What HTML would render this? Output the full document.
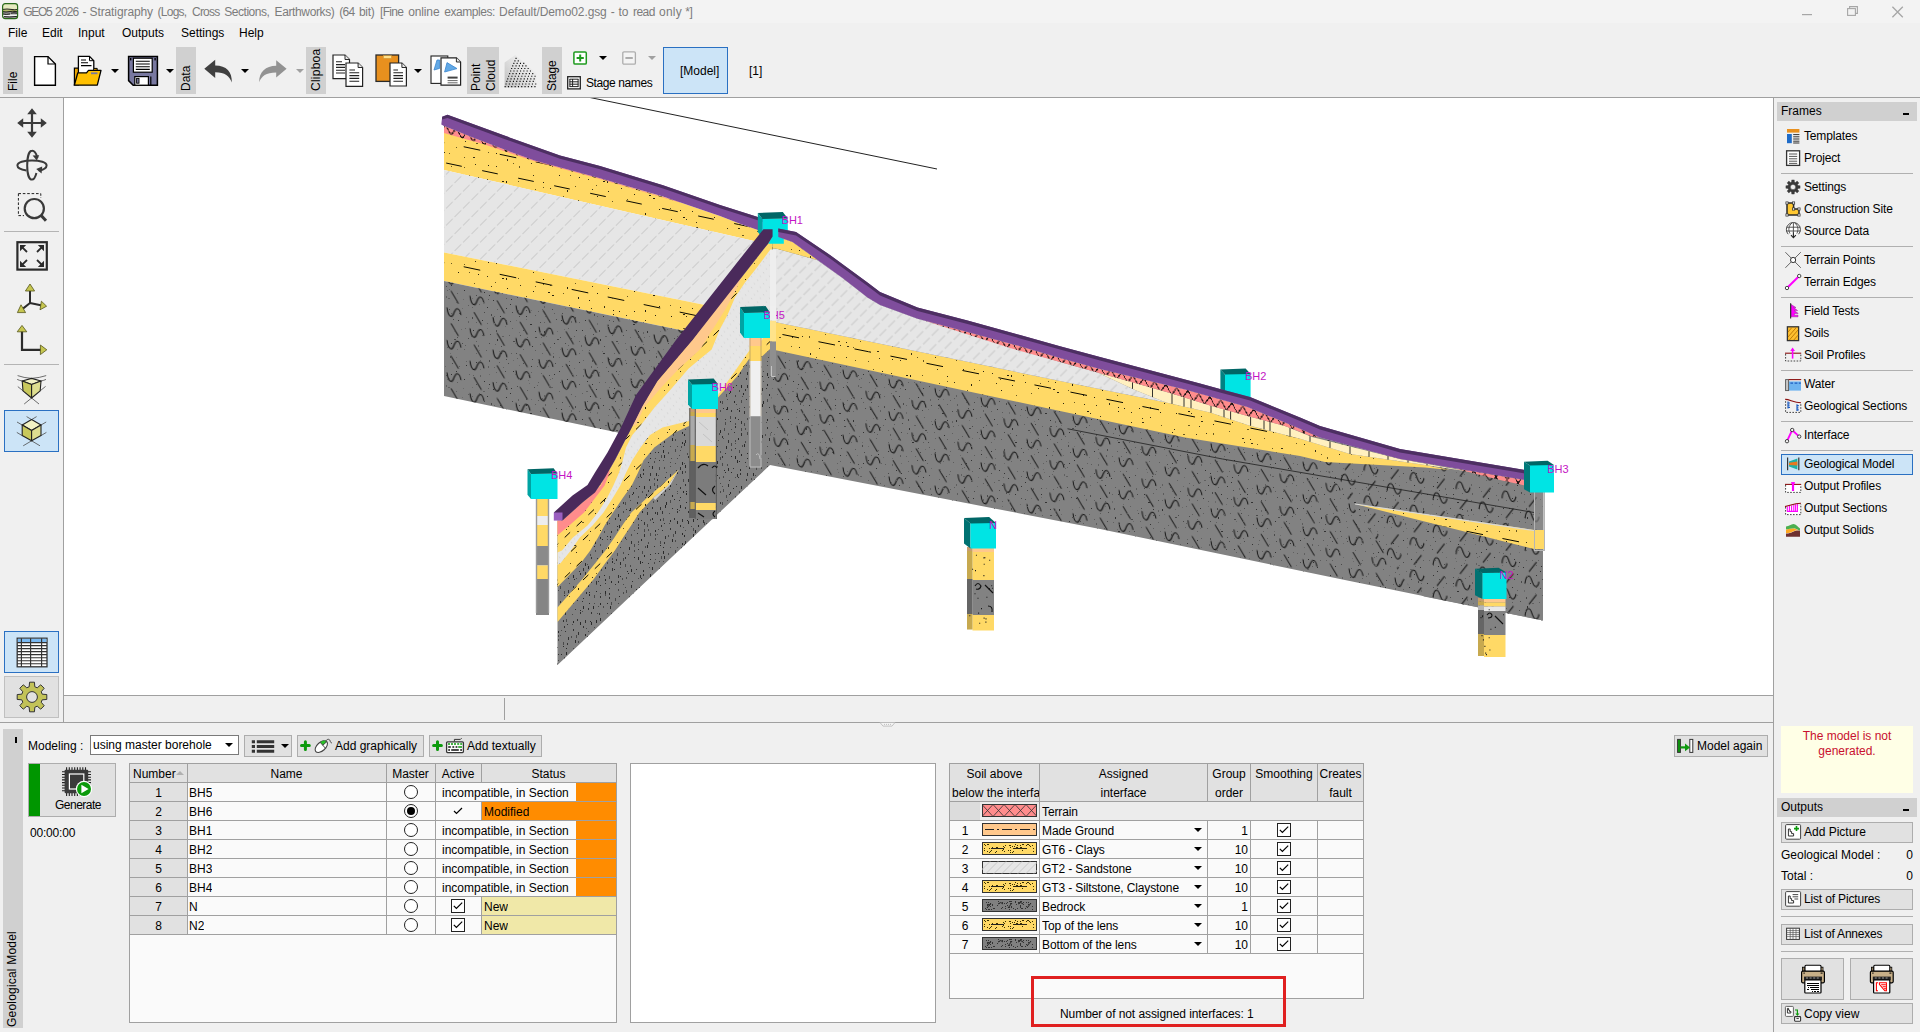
<!DOCTYPE html>
<html lang="en"><head><meta charset="utf-8"><title>GEO5 2026 - Stratigraphy</title>
<style>
*{box-sizing:border-box;margin:0;padding:0}
html,body{width:1920px;height:1032px;overflow:hidden;background:#f0f0f0}
body{font-family:"Liberation Sans",sans-serif;font-size:12px;color:#000;position:relative}
.a{position:absolute}
.t{position:absolute;white-space:nowrap;line-height:14px;height:14px}
.lbl{position:absolute;background:#d0d0d0}
.lbl span{position:absolute;white-space:nowrap;transform-origin:0 0;transform:rotate(-90deg);line-height:14px}
.btn{position:absolute;background:#e1e1e1;border:1px solid #adadad}
.hl{position:absolute;height:1px;background:#a0a0a0}
.vl{position:absolute;width:1px;background:#a0a0a0}
.sel{position:absolute;background:#cce4f7;border:1px solid #2a70c2}
.arr{position:absolute;width:0;height:0;border-left:4px solid transparent;border-right:4px solid transparent;border-top:4px solid #000}
.arr.g{border-top-color:#a0a0a0}
.hd{position:absolute;background:#d0d0d0}
table{border-collapse:collapse}
.cell{position:absolute;white-space:nowrap;line-height:18px;height:18px;overflow:hidden}
.radio{position:absolute;width:14px;height:14px;border:1.2px solid #222;border-radius:50%;background:#fff}
.chk{position:absolute;width:14px;height:14px;border:1.2px solid #222;background:#fff}
svg{position:absolute;overflow:visible}
</style></head>
<body>
<!-- chrome -->
<div class="a" style="left:0;top:0;width:1920px;height:23px;background:#f3f3f3"></div>
<div class="t ttl" style="left:23px;top:5px;width:680px;color:#7c7c7c"><span style="position:absolute;left:0.2px;top:0;letter-spacing:-1.29px">GEO5</span><span style="position:absolute;left:32.1px;top:0;letter-spacing:-0.88px">2026</span><span style="position:absolute;left:59.6px;top:0;letter-spacing:-0.80px">-</span><span style="position:absolute;left:66.5px;top:0;letter-spacing:-0.10px">Stratigraphy</span><span style="position:absolute;left:134.6px;top:0;letter-spacing:-0.76px">(Logs,</span><span style="position:absolute;left:169.0px;top:0;letter-spacing:-0.77px">Cross</span><span style="position:absolute;left:201.2px;top:0;letter-spacing:-0.45px">Sections,</span><span style="position:absolute;left:251.5px;top:0;letter-spacing:-0.37px">Earthworks)</span><span style="position:absolute;left:316.2px;top:0;letter-spacing:-0.70px">(64</span><span style="position:absolute;left:335.9px;top:0;letter-spacing:-0.27px">bit)</span><span style="position:absolute;left:357.1px;top:0;letter-spacing:-0.70px">[Fine</span><span style="position:absolute;left:385.2px;top:0;letter-spacing:-0.13px">online</span><span style="position:absolute;left:421.2px;top:0;letter-spacing:-0.43px">examples:</span><span style="position:absolute;left:476.1px;top:0;letter-spacing:-0.10px">Default/Demo02.gsg</span><span style="position:absolute;left:587.8px;top:0;letter-spacing:-0.70px">-</span><span style="position:absolute;left:595.5px;top:0;letter-spacing:0.00px">to</span><span style="position:absolute;left:610.1px;top:0;letter-spacing:-0.58px">read</span><span style="position:absolute;left:636.1px;top:0;letter-spacing:0.20px">only</span><span style="position:absolute;left:662.3px;top:0;letter-spacing:-0.40px">*]</span></div>
<div class="t mnu" style="left:8px;top:26px;">File</div>
<div class="t mnu" style="left:42px;top:26px;">Edit</div>
<div class="t mnu" style="left:78px;top:26px;">Input</div>
<div class="t mnu" style="left:122px;top:26px;">Outputs</div>
<div class="t mnu" style="left:181px;top:26px;">Settings</div>
<div class="t mnu" style="left:239px;top:26px;">Help</div>
<div class="lbl" style="left:3px;top:47px;width:20px;height:47px"><span style="left:3px;top:44px;letter-spacing:0px">File</span></div>
<div class="lbl" style="left:176px;top:47px;width:20px;height:47px"><span style="left:3px;top:44px;letter-spacing:0px">Data</span></div>
<div class="lbl" style="left:306px;top:47px;width:20px;height:47px"><span style="left:3px;top:44px;letter-spacing:0.25px">Clipboa</span></div>
<div class="lbl" style="left:467px;top:47px;width:32px;height:47px"><span style="left:2px;top:44px">Point</span><span style="left:17px;top:44px">Cloud</span></div>
<div class="lbl" style="left:542px;top:47px;width:20px;height:47px"><span style="left:3px;top:44px;letter-spacing:-0.2px">Stage</span></div>
<div class="arr" style="left:111px;top:69px"></div>
<div class="arr" style="left:166px;top:69px"></div>
<div class="arr" style="left:241px;top:69px"></div>
<div class="arr g" style="left:296px;top:69px"></div>
<div class="arr" style="left:414px;top:69px"></div>
<div class="arr" style="left:599px;top:56px"></div>
<div class="arr g" style="left:648px;top:56px"></div>
<div class="t" style="left:586px;top:76px;letter-spacing:-0.4px;">Stage names</div>
<div class="sel" style="left:663px;top:47px;width:65px;height:47px;border-color:#2a70c2"></div>
<div class="t" style="left:680px;top:64px;">[Model]</div>
<div class="t" style="left:749px;top:64px;">[1]</div>
<div class="hl" style="left:0;top:97px;width:1920px;background:#a0a0a0"></div>
<div class="a" style="left:63px;top:98px;width:1711px;height:598px;background:#fff;border-left:1px solid #a0a0a0;border-right:1px solid #a0a0a0;border-bottom:1px solid #a0a0a0"></div>
<div class="vl" style="left:504px;top:698px;height:22px;background:#a0a0a0"></div>
<div class="hl" style="left:0;top:722px;width:1774px"></div>
<div class="vl" style="left:63px;top:695px;height:27px"></div>
<div class="vl" style="left:1773px;top:695px;height:337px"></div>
<div class="hl" style="left:4px;top:231px;width:55px;background:#b4b4b4"></div>
<div class="hl" style="left:4px;top:364px;width:55px;background:#b4b4b4"></div>
<div class="sel" style="left:4px;top:410px;width:55px;height:42px"></div>
<div class="sel" style="left:4px;top:631px;width:55px;height:42px"></div>
<div class="btn" style="left:4px;top:676px;width:55px;height:42px;border-color:#c0c0c0"></div>
<!-- rpanel -->
<div class="hd" style="left:1777px;top:102px;width:140px;height:19px"></div>
<div class="t" style="left:1781px;top:104px;">Frames</div>
<div class="a" style="left:1903px;top:113px;width:6px;height:2px;background:#000"></div>
<div class="hl" style="left:1781px;top:173px;width:132px;background:#b0b0b0"></div>
<div class="hl" style="left:1781px;top:246px;width:132px;background:#b0b0b0"></div>
<div class="hl" style="left:1781px;top:297px;width:132px;background:#b0b0b0"></div>
<div class="hl" style="left:1781px;top:370px;width:132px;background:#b0b0b0"></div>
<div class="hl" style="left:1781px;top:421px;width:132px;background:#b0b0b0"></div>
<div class="hl" style="left:1781px;top:450px;width:132px;background:#b0b0b0"></div>
<div class="sel" style="left:1781px;top:454px;width:132px;height:21px"></div>
<div class="t" style="left:1804px;top:129px;letter-spacing:-0.16px;">Templates</div>
<div class="t" style="left:1804px;top:151px;letter-spacing:-0.16px;">Project</div>
<div class="t" style="left:1804px;top:180px;letter-spacing:-0.16px;">Settings</div>
<div class="t" style="left:1804px;top:202px;letter-spacing:-0.16px;">Construction Site</div>
<div class="t" style="left:1804px;top:224px;letter-spacing:-0.16px;">Source Data</div>
<div class="t" style="left:1804px;top:253px;letter-spacing:-0.16px;">Terrain Points</div>
<div class="t" style="left:1804px;top:275px;letter-spacing:-0.16px;">Terrain Edges</div>
<div class="t" style="left:1804px;top:304px;letter-spacing:-0.16px;">Field Tests</div>
<div class="t" style="left:1804px;top:326px;letter-spacing:-0.16px;">Soils</div>
<div class="t" style="left:1804px;top:348px;letter-spacing:-0.16px;">Soil Profiles</div>
<div class="t" style="left:1804px;top:377px;letter-spacing:-0.16px;">Water</div>
<div class="t" style="left:1804px;top:399px;letter-spacing:-0.16px;">Geological Sections</div>
<div class="t" style="left:1804px;top:428px;letter-spacing:-0.16px;">Interface</div>
<div class="t" style="left:1804px;top:457px;letter-spacing:-0.16px;">Geological Model</div>
<div class="t" style="left:1804px;top:479px;letter-spacing:-0.16px;">Output Profiles</div>
<div class="t" style="left:1804px;top:501px;letter-spacing:-0.16px;">Output Sections</div>
<div class="t" style="left:1804px;top:523px;letter-spacing:-0.16px;">Output Solids</div>
<div class="a" style="left:1781px;top:726px;width:132px;height:67px;background:#ffffe6"></div>
<div class="t" style="left:1781px;top:729px;width:132px;text-align:center;color:#c8102e">The model is not</div>
<div class="t" style="left:1781px;top:744px;width:132px;text-align:center;color:#c8102e">generated.</div>
<div class="hd" style="left:1777px;top:798px;width:140px;height:19px"></div>
<div class="t" style="left:1781px;top:800px;">Outputs</div>
<div class="a" style="left:1903px;top:809px;width:6px;height:2px;background:#000"></div>
<div class="btn" style="left:1781px;top:822px;width:132px;height:21px"></div>
<div class="t" style="left:1804px;top:825px;">Add Picture</div>
<div class="t" style="left:1781px;top:848px;">Geological Model :</div>
<div class="t" style="left:1881px;top:848px;width:32px;text-align:right">0</div>
<div class="t" style="left:1781px;top:869px;">Total :</div>
<div class="t" style="left:1881px;top:869px;width:32px;text-align:right">0</div>
<div class="btn" style="left:1781px;top:889px;width:132px;height:21px"></div>
<div class="t" style="left:1804px;top:892px;letter-spacing:-0.16px;">List of Pictures</div>
<div class="hl" style="left:1781px;top:916px;width:132px;background:#b0b0b0"></div>
<div class="btn" style="left:1781px;top:924px;width:132px;height:21px"></div>
<div class="t" style="left:1804px;top:927px;letter-spacing:-0.2px;">List of Annexes</div>
<div class="hl" style="left:1781px;top:951px;width:132px;background:#b0b0b0"></div>
<div class="btn" style="left:1781px;top:958px;width:63px;height:42px"></div>
<div class="btn" style="left:1850px;top:958px;width:63px;height:42px"></div>
<div class="btn" style="left:1781px;top:1003px;width:132px;height:21px"></div>
<div class="t" style="left:1804px;top:1007px;">Copy view</div>
<!-- bpanel -->
<div class="lbl" style="left:3px;top:729px;width:20px;height:299px"><span style="left:2px;top:298px;letter-spacing:0.2px">Geological Model</span></div>
<div class="a" style="left:14.7px;top:736.5px;width:2.3px;height:6.5px;background:#000"></div>
<div class="t" style="left:28px;top:739px;">Modeling :</div>
<div class="a" style="left:90px;top:735px;width:149px;height:20px;background:#fff;border:1px solid #7a7a7a"></div>
<div class="t" style="left:93px;top:738px;">using master borehole</div>
<div class="arr" style="left:225px;top:743px"></div>
<div class="btn" style="left:244px;top:735px;width:48px;height:22px"></div>
<div class="arr" style="left:281px;top:744px"></div>
<div class="btn" style="left:297px;top:735px;width:127px;height:22px"></div>
<div class="t" style="left:335px;top:739px;">Add graphically</div>
<div class="btn" style="left:429px;top:735px;width:113px;height:22px"></div>
<div class="t" style="left:467px;top:739px;">Add textually</div>
<div class="btn" style="left:1674px;top:735px;width:94px;height:22px"></div>
<div class="t" style="left:1697px;top:739px;">Model again</div>
<div class="btn" style="left:28px;top:763px;width:88px;height:54px"></div>
<div class="a" style="left:29px;top:764px;width:11px;height:52px;background:#009600"></div>
<div class="t" style="left:40px;top:798px;width:76px;text-align:center;letter-spacing:-0.5px">Generate</div>
<div class="t" style="left:30px;top:826px;letter-spacing:-0.2px;">00:00:00</div>
<div class="a" style="left:129px;top:763px;width:488px;height:260px;background:#fafafa;border:1px solid #a0a0a0"></div>
<div class="a" style="left:130px;top:764px;width:486px;height:18px;background:#e1e1e1"></div>
<div class="a" style="left:130px;top:782px;width:57px;height:152px;background:#e1e1e1"></div>
<div class="cell" style="left:133px;top:765px">Number</div>
<div class="cell" style="left:187px;top:765px;width:199px;text-align:center">Name</div>
<div class="cell" style="left:386px;top:765px;width:49px;text-align:center">Master</div>
<div class="cell" style="left:435px;top:765px;width:46px;text-align:center">Active</div>
<div class="cell" style="left:481px;top:765px;width:135px;text-align:center">Status</div>
<div class="a" style="left:176px;top:771px;width:0;height:0;border-left:4px solid transparent;border-right:4px solid transparent;border-bottom:4px solid #b0b0b0"></div>
<div class="a" style="left:576px;top:783px;width:40px;height:18px;background:#ff8c00"></div>
<div class="cell" style="left:442px;top:784px">incompatible, in Section</div>
<div class="cell" style="left:130px;top:784px;width:57px;text-align:center">1</div>
<div class="cell" style="left:189px;top:784px">BH5</div>
<div class="radio" style="left:403.5px;top:784.5px"></div>
<div class="a" style="left:482px;top:802px;width:134px;height:18px;background:#ff8c00"></div>
<div class="cell" style="left:484px;top:803px">Modified</div>
<svg style="left:453px;top:807px" width="10" height="8"><path d="M1 4 L3.5 6.5 L9 1" fill="none" stroke="#000" stroke-width="1.2"/></svg>
<div class="cell" style="left:130px;top:803px;width:57px;text-align:center">2</div>
<div class="cell" style="left:189px;top:803px">BH6</div>
<div class="radio" style="left:403.5px;top:803.5px"></div>
<div class="a" style="left:406.5px;top:806.5px;width:8px;height:8px;border-radius:50%;background:#000"></div>
<div class="a" style="left:576px;top:821px;width:40px;height:18px;background:#ff8c00"></div>
<div class="cell" style="left:442px;top:822px">incompatible, in Section</div>
<div class="cell" style="left:130px;top:822px;width:57px;text-align:center">3</div>
<div class="cell" style="left:189px;top:822px">BH1</div>
<div class="radio" style="left:403.5px;top:822.5px"></div>
<div class="a" style="left:576px;top:840px;width:40px;height:18px;background:#ff8c00"></div>
<div class="cell" style="left:442px;top:841px">incompatible, in Section</div>
<div class="cell" style="left:130px;top:841px;width:57px;text-align:center">4</div>
<div class="cell" style="left:189px;top:841px">BH2</div>
<div class="radio" style="left:403.5px;top:841.5px"></div>
<div class="a" style="left:576px;top:859px;width:40px;height:18px;background:#ff8c00"></div>
<div class="cell" style="left:442px;top:860px">incompatible, in Section</div>
<div class="cell" style="left:130px;top:860px;width:57px;text-align:center">5</div>
<div class="cell" style="left:189px;top:860px">BH3</div>
<div class="radio" style="left:403.5px;top:860.5px"></div>
<div class="a" style="left:576px;top:878px;width:40px;height:18px;background:#ff8c00"></div>
<div class="cell" style="left:442px;top:879px">incompatible, in Section</div>
<div class="cell" style="left:130px;top:879px;width:57px;text-align:center">6</div>
<div class="cell" style="left:189px;top:879px">BH4</div>
<div class="radio" style="left:403.5px;top:879.5px"></div>
<div class="a" style="left:482px;top:897px;width:134px;height:18px;background:#f0e8a8"></div>
<div class="cell" style="left:484px;top:898px">New</div>
<div class="chk" style="left:450.7px;top:898.6px"></div>
<svg style="left:452px;top:901px" width="12" height="10"><path d="M1.8 4.8 L4.4 7.4 L10.2 1.6" fill="none" stroke="#000" stroke-width="1.2"/></svg>
<div class="cell" style="left:130px;top:898px;width:57px;text-align:center">7</div>
<div class="cell" style="left:189px;top:898px">N</div>
<div class="radio" style="left:403.5px;top:898.5px"></div>
<div class="a" style="left:482px;top:916px;width:134px;height:18px;background:#f0e8a8"></div>
<div class="cell" style="left:484px;top:917px">New</div>
<div class="chk" style="left:450.7px;top:917.6px"></div>
<svg style="left:452px;top:920px" width="12" height="10"><path d="M1.8 4.8 L4.4 7.4 L10.2 1.6" fill="none" stroke="#000" stroke-width="1.2"/></svg>
<div class="cell" style="left:130px;top:917px;width:57px;text-align:center">8</div>
<div class="cell" style="left:189px;top:917px">N2</div>
<div class="radio" style="left:403.5px;top:917.5px"></div>
<div class="hl" style="left:130px;top:782px;width:486px;background:#a0a0a0"></div>
<div class="hl" style="left:130px;top:801px;width:486px;background:#a0a0a0"></div>
<div class="hl" style="left:130px;top:820px;width:486px;background:#a0a0a0"></div>
<div class="hl" style="left:130px;top:839px;width:486px;background:#a0a0a0"></div>
<div class="hl" style="left:130px;top:858px;width:486px;background:#a0a0a0"></div>
<div class="hl" style="left:130px;top:877px;width:486px;background:#a0a0a0"></div>
<div class="hl" style="left:130px;top:896px;width:486px;background:#a0a0a0"></div>
<div class="hl" style="left:130px;top:915px;width:486px;background:#a0a0a0"></div>
<div class="hl" style="left:130px;top:934px;width:486px;background:#a0a0a0"></div>
<div class="vl" style="left:187px;top:764px;height:171px;background:#a0a0a0"></div>
<div class="vl" style="left:386px;top:764px;height:171px;background:#a0a0a0"></div>
<div class="vl" style="left:435px;top:764px;height:171px;background:#a0a0a0"></div>
<div class="vl" style="left:481px;top:764px;height:19px;background:#a0a0a0"></div>
<div class="vl" style="left:481px;top:801px;height:19px;background:#a0a0a0"></div>
<div class="vl" style="left:481px;top:896px;height:19px;background:#a0a0a0"></div>
<div class="vl" style="left:481px;top:915px;height:19px;background:#a0a0a0"></div>
<div class="a" style="left:630px;top:763px;width:306px;height:260px;background:#fff;border:1px solid #a0a0a0"></div>
<!-- bpanel2 -->
<div class="a" style="left:949px;top:763px;width:415px;height:236px;background:#fafafa;border:1px solid #a0a0a0"></div>
<div class="a" style="left:950px;top:764px;width:413px;height:37px;background:#e1e1e1"></div>
<div class="a" style="left:950px;top:802px;width:413px;height:18px;background:#ececec"></div><div class="a" style="left:950px;top:802px;width:30px;height:18px;background:#dcdcdc"></div>
<div class="cell" style="left:950px;top:765px;width:89px;text-align:center;">Soil above</div>
<div class="cell" style="left:952px;top:784px;width:87px;text-align:left;">below the interface</div>
<div class="cell" style="left:1040px;top:765px;width:167px;text-align:center;">Assigned</div>
<div class="cell" style="left:1040px;top:784px;width:167px;text-align:center;">interface</div>
<div class="cell" style="left:1208px;top:765px;width:42px;text-align:center;">Group</div>
<div class="cell" style="left:1208px;top:784px;width:42px;text-align:center;">order</div>
<div class="cell" style="left:1251px;top:765px;width:66px;text-align:center;">Smoothing</div>
<div class="cell" style="left:1318px;top:765px;width:45px;text-align:center;">Creates</div>
<div class="cell" style="left:1318px;top:784px;width:45px;text-align:center;">fault</div>
<svg style="left:982px;top:804px;overflow:hidden" width="55" height="13" viewBox="0 0 55 13"><rect x="0.5" y="0.5" width="54" height="12" fill="#ff8c8c" stroke="#333"/><path d="M0 0.5 L11 12.5 M11 0.5 L0 12.5 M11 0.5 L22 12.5 M22 0.5 L11 12.5 M22 0.5 L33 12.5 M33 0.5 L22 12.5 M33 0.5 L44 12.5 M44 0.5 L33 12.5 M44 0.5 L55 12.5 M55 0.5 L44 12.5 " stroke="#333" stroke-width="0.8" fill="none" clip-path="inset(0)"/></svg>
<div class="cell" style="left:950px;top:803px;width:30px;text-align:center;"></div>
<div class="cell" style="left:1042px;top:803px;width:160px;text-align:left;letter-spacing:-0.12px;">Terrain</div>
<svg style="left:982px;top:823px;overflow:hidden" width="55" height="13" viewBox="0 0 55 13"><rect x="0.5" y="0.5" width="54" height="12" fill="#ffc88c" stroke="#333"/><path d="M3 6.5 H12 M15 6.5 H17 M20 6.5 H30 M33 6.5 H35 M38 6.5 H48 M51 6.5 H53" stroke="#222" stroke-width="1"/></svg>
<div class="cell" style="left:950px;top:822px;width:30px;text-align:center;">1</div>
<div class="cell" style="left:1042px;top:822px;width:160px;text-align:left;letter-spacing:-0.12px;">Made Ground</div>
<div class="arr" style="left:1194px;top:828px"></div>
<div class="cell" style="left:1208px;top:822px;width:40px;text-align:right;">1</div>
<div class="chk" style="left:1277px;top:822.6px"></div>
<svg style="left:1278.3px;top:825px" width="12" height="10"><path d="M1.8 4.8 L4.4 7.4 L10.2 1.6" fill="none" stroke="#000" stroke-width="1.2"/></svg>
<svg style="left:982px;top:842px;overflow:hidden" width="55" height="13" viewBox="0 0 55 13"><rect x="0.5" y="0.5" width="54" height="12" fill="#ffd966" stroke="#333"/><path d="M9 6.5 H22 M31 6.5 H45" stroke="#222" stroke-width="1"/><path d="M30 10.5h1M51 9.5h1M30 10.5h1M39 5.5h1M13 10.5h1M32 4.5h1M8 9.5h1M21 4.5h1M7 10.5h1M46 2.5h1M40 8.5h1M30 4.5h1M41 2.5h1M35 3.5h1M5 2.5h1M14 5.5h1M40 2.5h1M51 9.5h1M22 9.5h1M39 5.5h1M35 5.5h1M42 6.5h1M33 2.5h1M44 3.5h1M31 6.5h1M28 10.5h1M7 6.5h1M22 5.5h1M34 6.5h1M3 3.5h1M38 3.5h1M27 3.5h1M20 8.5h1M6 2.5h1M45 2.5h1M15 5.5h1M5 9.5h1M26 8.5h1M28 3.5h1M38 5.5h1M51 6.5h1M23 3.5h1M21 7.5h1M2 8.5h1M50 3.5h1M10 5.5h1M47 3.5h1M2 2.5h1M31 9.5h1M13 10.5h1M14 9.5h1M34 5.5h1M48 4.5h1M28 8.5h1M9 8.5h1M28 5.5h1M2 6.5h1M39 6.5h1" stroke="#3a3000" stroke-width="1" fill="none" shape-rendering="crispEdges"/></svg>
<div class="cell" style="left:950px;top:841px;width:30px;text-align:center;">2</div>
<div class="cell" style="left:1042px;top:841px;width:160px;text-align:left;letter-spacing:-0.12px;">GT6 - Clays</div>
<div class="arr" style="left:1194px;top:847px"></div>
<div class="cell" style="left:1208px;top:841px;width:40px;text-align:right;">10</div>
<div class="chk" style="left:1277px;top:841.6px"></div>
<svg style="left:1278.3px;top:844px" width="12" height="10"><path d="M1.8 4.8 L4.4 7.4 L10.2 1.6" fill="none" stroke="#000" stroke-width="1.2"/></svg>
<svg style="left:982px;top:861px;overflow:hidden" width="55" height="13" viewBox="0 0 55 13"><rect x="0.5" y="0.5" width="54" height="12" fill="#e6e6e6" stroke="#333"/><path d="M-4 12.5 L8 0.5 M4 12.5 L16 0.5 M12 12.5 L24 0.5 M20 12.5 L32 0.5 M28 12.5 L40 0.5 M36 12.5 L48 0.5 M44 12.5 L56 0.5 M52 12.5 L64 0.5 M60 12.5 L72 0.5 " stroke="#c8c8c8" stroke-width="1" fill="none"/></svg>
<div class="cell" style="left:950px;top:860px;width:30px;text-align:center;">3</div>
<div class="cell" style="left:1042px;top:860px;width:160px;text-align:left;letter-spacing:-0.12px;">GT2 - Sandstone</div>
<div class="arr" style="left:1194px;top:866px"></div>
<div class="cell" style="left:1208px;top:860px;width:40px;text-align:right;">10</div>
<div class="chk" style="left:1277px;top:860.6px"></div>
<svg style="left:1278.3px;top:863px" width="12" height="10"><path d="M1.8 4.8 L4.4 7.4 L10.2 1.6" fill="none" stroke="#000" stroke-width="1.2"/></svg>
<svg style="left:982px;top:880px;overflow:hidden" width="55" height="13" viewBox="0 0 55 13"><rect x="0.5" y="0.5" width="54" height="12" fill="#ffd966" stroke="#333"/><path d="M9 6.5 H22 M31 6.5 H45" stroke="#222" stroke-width="1"/><path d="M30 10.5h1M51 9.5h1M30 10.5h1M39 5.5h1M13 10.5h1M32 4.5h1M8 9.5h1M21 4.5h1M7 10.5h1M46 2.5h1M40 8.5h1M30 4.5h1M41 2.5h1M35 3.5h1M5 2.5h1M14 5.5h1M40 2.5h1M51 9.5h1M22 9.5h1M39 5.5h1M35 5.5h1M42 6.5h1M33 2.5h1M44 3.5h1M31 6.5h1M28 10.5h1M7 6.5h1M22 5.5h1M34 6.5h1M3 3.5h1M38 3.5h1M27 3.5h1M20 8.5h1M6 2.5h1M45 2.5h1M15 5.5h1M5 9.5h1M26 8.5h1M28 3.5h1M38 5.5h1M51 6.5h1M23 3.5h1M21 7.5h1M2 8.5h1M50 3.5h1M10 5.5h1M47 3.5h1M2 2.5h1M31 9.5h1M13 10.5h1M14 9.5h1M34 5.5h1M48 4.5h1M28 8.5h1M9 8.5h1M28 5.5h1M2 6.5h1M39 6.5h1" stroke="#3a3000" stroke-width="1" fill="none" shape-rendering="crispEdges"/></svg>
<div class="cell" style="left:950px;top:879px;width:30px;text-align:center;">4</div>
<div class="cell" style="left:1042px;top:879px;width:160px;text-align:left;letter-spacing:-0.12px;">GT3 - Siltstone, Claystone</div>
<div class="arr" style="left:1194px;top:885px"></div>
<div class="cell" style="left:1208px;top:879px;width:40px;text-align:right;">10</div>
<div class="chk" style="left:1277px;top:879.6px"></div>
<svg style="left:1278.3px;top:882px" width="12" height="10"><path d="M1.8 4.8 L4.4 7.4 L10.2 1.6" fill="none" stroke="#000" stroke-width="1.2"/></svg>
<svg style="left:982px;top:899px;overflow:hidden" width="55" height="13" viewBox="0 0 55 13"><rect x="0.5" y="0.5" width="54" height="12" fill="#808080" stroke="#333"/><path d="M5 9 L9 4 M16 5 q3 -3 5 0 M26 9 L30 4 M36 5 q3 -3 5 0 M45 9 L49 4" stroke="#222" stroke-width="1" fill="none"/><path d="M22 4.5h1M27 2.5h1M6 10.5h1M8 7.5h1M39 2.5h1M34 5.5h1M4 3.5h1M29 8.5h1M6 5.5h1M7 10.5h1M29 2.5h1M38 3.5h1M16 2.5h1M38 8.5h1M5 5.5h1M4 10.5h1M10 6.5h1M28 4.5h1M36 3.5h1M38 6.5h1M37 4.5h1M8 5.5h1M25 3.5h1M37 3.5h1M38 2.5h1M41 5.5h1M33 10.5h1M29 7.5h1M31 9.5h1M25 6.5h1M17 4.5h1M46 5.5h1M7 6.5h1M35 9.5h1M23 9.5h1M20 3.5h1M9 10.5h1M28 4.5h1M50 7.5h1M11 9.5h1M28 2.5h1M44 3.5h1M50 10.5h1M38 7.5h1M23 7.5h1M40 9.5h1M39 9.5h1M6 3.5h1M19 9.5h1M46 3.5h1M5 6.5h1M43 9.5h1M20 8.5h1M44 7.5h1M3 9.5h1M24 4.5h1M41 3.5h1M33 2.5h1M15 6.5h1M10 5.5h1M27 8.5h1M33 3.5h1M12 9.5h1M27 10.5h1" stroke="#333" stroke-width="1" fill="none" shape-rendering="crispEdges"/></svg>
<div class="cell" style="left:950px;top:898px;width:30px;text-align:center;">5</div>
<div class="cell" style="left:1042px;top:898px;width:160px;text-align:left;letter-spacing:-0.12px;">Bedrock</div>
<div class="arr" style="left:1194px;top:904px"></div>
<div class="cell" style="left:1208px;top:898px;width:40px;text-align:right;">1</div>
<div class="chk" style="left:1277px;top:898.6px"></div>
<svg style="left:1278.3px;top:901px" width="12" height="10"><path d="M1.8 4.8 L4.4 7.4 L10.2 1.6" fill="none" stroke="#000" stroke-width="1.2"/></svg>
<svg style="left:982px;top:918px;overflow:hidden" width="55" height="13" viewBox="0 0 55 13"><rect x="0.5" y="0.5" width="54" height="12" fill="#ffd966" stroke="#333"/><path d="M9 6.5 H22 M31 6.5 H45" stroke="#222" stroke-width="1"/><path d="M30 10.5h1M51 9.5h1M30 10.5h1M39 5.5h1M13 10.5h1M32 4.5h1M8 9.5h1M21 4.5h1M7 10.5h1M46 2.5h1M40 8.5h1M30 4.5h1M41 2.5h1M35 3.5h1M5 2.5h1M14 5.5h1M40 2.5h1M51 9.5h1M22 9.5h1M39 5.5h1M35 5.5h1M42 6.5h1M33 2.5h1M44 3.5h1M31 6.5h1M28 10.5h1M7 6.5h1M22 5.5h1M34 6.5h1M3 3.5h1M38 3.5h1M27 3.5h1M20 8.5h1M6 2.5h1M45 2.5h1M15 5.5h1M5 9.5h1M26 8.5h1M28 3.5h1M38 5.5h1M51 6.5h1M23 3.5h1M21 7.5h1M2 8.5h1M50 3.5h1M10 5.5h1M47 3.5h1M2 2.5h1M31 9.5h1M13 10.5h1M14 9.5h1M34 5.5h1M48 4.5h1M28 8.5h1M9 8.5h1M28 5.5h1M2 6.5h1M39 6.5h1" stroke="#3a3000" stroke-width="1" fill="none" shape-rendering="crispEdges"/></svg>
<div class="cell" style="left:950px;top:917px;width:30px;text-align:center;">6</div>
<div class="cell" style="left:1042px;top:917px;width:160px;text-align:left;letter-spacing:-0.12px;">Top of the lens</div>
<div class="arr" style="left:1194px;top:923px"></div>
<div class="cell" style="left:1208px;top:917px;width:40px;text-align:right;">10</div>
<div class="chk" style="left:1277px;top:917.6px"></div>
<svg style="left:1278.3px;top:920px" width="12" height="10"><path d="M1.8 4.8 L4.4 7.4 L10.2 1.6" fill="none" stroke="#000" stroke-width="1.2"/></svg>
<svg style="left:982px;top:937px;overflow:hidden" width="55" height="13" viewBox="0 0 55 13"><rect x="0.5" y="0.5" width="54" height="12" fill="#808080" stroke="#333"/><path d="M5 9 L9 4 M16 5 q3 -3 5 0 M26 9 L30 4 M36 5 q3 -3 5 0 M45 9 L49 4" stroke="#222" stroke-width="1" fill="none"/><path d="M22 4.5h1M27 2.5h1M6 10.5h1M8 7.5h1M39 2.5h1M34 5.5h1M4 3.5h1M29 8.5h1M6 5.5h1M7 10.5h1M29 2.5h1M38 3.5h1M16 2.5h1M38 8.5h1M5 5.5h1M4 10.5h1M10 6.5h1M28 4.5h1M36 3.5h1M38 6.5h1M37 4.5h1M8 5.5h1M25 3.5h1M37 3.5h1M38 2.5h1M41 5.5h1M33 10.5h1M29 7.5h1M31 9.5h1M25 6.5h1M17 4.5h1M46 5.5h1M7 6.5h1M35 9.5h1M23 9.5h1M20 3.5h1M9 10.5h1M28 4.5h1M50 7.5h1M11 9.5h1M28 2.5h1M44 3.5h1M50 10.5h1M38 7.5h1M23 7.5h1M40 9.5h1M39 9.5h1M6 3.5h1M19 9.5h1M46 3.5h1M5 6.5h1M43 9.5h1M20 8.5h1M44 7.5h1M3 9.5h1M24 4.5h1M41 3.5h1M33 2.5h1M15 6.5h1M10 5.5h1M27 8.5h1M33 3.5h1M12 9.5h1M27 10.5h1" stroke="#333" stroke-width="1" fill="none" shape-rendering="crispEdges"/></svg>
<div class="cell" style="left:950px;top:936px;width:30px;text-align:center;">7</div>
<div class="cell" style="left:1042px;top:936px;width:160px;text-align:left;letter-spacing:-0.12px;">Bottom of the lens</div>
<div class="arr" style="left:1194px;top:942px"></div>
<div class="cell" style="left:1208px;top:936px;width:40px;text-align:right;">10</div>
<div class="chk" style="left:1277px;top:936.6px"></div>
<svg style="left:1278.3px;top:939px" width="12" height="10"><path d="M1.8 4.8 L4.4 7.4 L10.2 1.6" fill="none" stroke="#000" stroke-width="1.2"/></svg>
<div class="hl" style="left:950px;top:801px;width:413px"></div>
<div class="hl" style="left:950px;top:820px;width:413px"></div>
<div class="hl" style="left:950px;top:839px;width:413px"></div>
<div class="hl" style="left:950px;top:858px;width:413px"></div>
<div class="hl" style="left:950px;top:877px;width:413px"></div>
<div class="hl" style="left:950px;top:896px;width:413px"></div>
<div class="hl" style="left:950px;top:915px;width:413px"></div>
<div class="hl" style="left:950px;top:934px;width:413px"></div>
<div class="hl" style="left:950px;top:953px;width:413px"></div>
<div class="vl" style="left:1039px;top:764px;height:38px"></div>
<div class="vl" style="left:1039px;top:802px;height:152px"></div>
<div class="vl" style="left:1207px;top:764px;height:38px"></div>
<div class="vl" style="left:1207px;top:821px;height:133px"></div>
<div class="vl" style="left:1250px;top:764px;height:38px"></div>
<div class="vl" style="left:1250px;top:821px;height:133px"></div>
<div class="vl" style="left:1317px;top:764px;height:38px"></div>
<div class="vl" style="left:1317px;top:821px;height:133px"></div>
<div class="a" style="left:1031px;top:976px;width:255px;height:51px;border:3px solid #e02020"></div>
<div class="t" style="left:1060px;top:1007px;letter-spacing:-0.07px;">Number of not assigned interfaces: 1</div>
<!-- scene -->
<svg style="left:0;top:0" width="1920" height="1032" viewBox="0 0 1920 1032"><defs><pattern id="dY" width="101" height="97" patternUnits="userSpaceOnUse"><path d="M6 7.5h1M1 45.5h1M1 46.5h1M8 66.5h1M21 5.5h1M17 43.5h1M14 69.5h1M14 70.5h1M13 84.5h1M30 92.5h1M35 41.5h2M38 90.5h1M50 37.5h1M52 50.5h1M45 56.5h1M47 69.5h1M58 2.5h1M64 14.5h1M60 60.5h1M60 70.5h1M65 78.5h1M77 37.5h2M72 46.5h2M70 89.5h1M84 55.5h1M91 88.5h1" stroke="#6b5a20" stroke-width="1" fill="none" shape-rendering="crispEdges"/><path d="M7 19.5h1M7 23.5h1M1 36.5h1M1 84.5h1M1 85.5h1M2 94.5h1M13 20.5h1M28 0.5h1M28 20.5h1M43 1.5h2M39 19.5h1M39 20.5h1M38 51.5h1M38 85.5h1M47 4.5h2M53 15.5h1M49 24.5h1M54 78.5h1M65 25.5h1M62 93.5h1M62 94.5h1M73 6.5h1M73 7.5h1M74 16.5h1M77 23.5h2M74 80.5h1M84 9.5h1M84 68.5h1M92 2.5h1M92 56.5h1M98 84.5h2" stroke="#2a2410" stroke-width="1" fill="none" shape-rendering="crispEdges"/><path d="M2 62.5h1M2 63.5h1M20 24.5h1M20 34.5h1M11 57.5h1M15 91.5h1M31 30.5h1M31 34.5h2M30 50.5h2M32 54.5h1M26 66.5h1M28 78.5h1M39 29.5h1M39 55.5h2M38 66.5h1M45 91.5h1M63 41.5h1M61 44.5h1M69 60.5h2M71 67.5h1M86 17.5h1M80 25.5h1M88 38.5h1M85 46.5h1M83 82.5h1M87 92.5h1M99 15.5h1M99 16.5h1M90 28.5h1M90 33.5h2M95 45.5h1M92 69.5h1" stroke="#3d3416" stroke-width="1" fill="none" shape-rendering="crispEdges"/></pattern><pattern id="dR" width="103" height="89" patternUnits="userSpaceOnUse"><path d="M2 2.5h1M7 4.5h1M12 34.5h1M20 48.5h1M20 83.5h1M22 10.5h1M26 17.5h1M27 42.5h1M23 44.5h1M31 4.5h1M30 48.5h1M30 49.5h1M35 80.5h1M31 83.5h1M39 46.5h1M47 10.5h1M45 26.5h1M56 38.5h1M54 50.5h1M53 78.5h1M61 19.5h1M64 55.5h1M59 69.5h1M64 74.5h1M70 68.5h1M66 78.5h1M66 79.5h1M76 10.5h1M76 11.5h1M76 32.5h1M75 56.5h1M74 83.5h1M87 6.5h1M84 26.5h1M85 42.5h1M94 31.5h1M96 26.5h1M97 68.5h1M99 86.5h1" stroke="#5c5c5c" stroke-width="1" fill="none" shape-rendering="crispEdges"/><path d="M4 9.5h1M4 23.5h1M1 53.5h1M4 65.5h1M0 76.5h1M13 24.5h1M11 52.5h1M14 27.5h1M16 43.5h1M33 10.5h1M31 69.5h1M42 64.5h1M38 86.5h1M44 1.5h1M50 41.5h1M49 62.5h1M45 82.5h1M51 32.5h1M59 12.5h1M60 31.5h1M68 13.5h1M67 83.5h1M77 18.5h1M75 61.5h1M82 56.5h1M82 57.5h1M87 84.5h1M93 59.5h1M101 4.5h1" stroke="#6a6a6a" stroke-width="1" fill="none" shape-rendering="crispEdges"/><path d="M0 18.5h1M3 43.5h1M3 44.5h1M13 18.5h1M12 70.5h1M7 76.5h1M8 82.5h1M16 16.5h1M23 6.5h1M23 26.5h1M22 29.5h1M25 65.5h1M25 66.5h1M26 70.5h1M25 77.5h1M27 86.5h1M35 23.5h1M34 29.5h1M34 30.5h1M29 39.5h1M29 40.5h1M29 55.5h1M37 22.5h1M36 31.5h2M44 35.5h1M54 5.5h1M57 18.5h1M56 54.5h1M56 55.5h1M53 61.5h1M52 82.5h1M60 40.5h1M64 86.5h1M68 4.5h1M68 19.5h1M68 20.5h1M71 35.5h2M67 37.5h1M82 11.5h1M84 16.5h1M82 49.5h1M83 77.5h1M91 11.5h1M90 26.5h1M90 69.5h2M100 61.5h1" stroke="#606060" stroke-width="1" fill="none" shape-rendering="crispEdges"/><path d="M2 30.5h1M4 49.5h1M5 68.5h1M1 86.5h1M8 7.5h1M11 43.5h1M8 63.5h1M17 3.5h1M19 31.5h1M20 70.5h2M25 55.5h1M34 19.5h1M38 0.5h1M38 1.5h1M40 7.5h1M37 42.5h1M41 52.5h1M42 72.5h2M47 46.5h1M45 70.5h1M50 76.5h1M56 71.5h1M64 28.5h1M60 50.5h1M60 51.5h1M72 45.5h1M77 4.5h1M77 5.5h1M79 47.5h1M79 48.5h1M78 67.5h1M77 76.5h1M84 63.5h1M84 64.5h1M94 3.5h1M93 15.5h1M94 53.5h1M89 79.5h1M96 7.5h1M100 45.5h1M98 54.5h1M101 74.5h2" stroke="#4a4a4a" stroke-width="1" fill="none" shape-rendering="crispEdges"/><path d="M11 49.5h1M16 10.5h1M15 57.5h2M20 64.5h1M17 79.5h1M29 64.5h1M29 65.5h1M39 18.5h1M39 76.5h1M44 15.5h1M46 53.5h1M54 9.5h1M52 23.5h1M64 6.5h1M61 63.5h1M72 25.5h1M70 53.5h1M67 63.5h1M77 28.5h1M75 40.5h1M81 33.5h1M85 72.5h1M85 73.5h1M94 41.5h1M88 49.5h1M88 86.5h2M101 15.5h1M99 32.5h1M98 37.5h1" stroke="#333333" stroke-width="1" fill="none" shape-rendering="crispEdges"/></pattern><pattern id="dF" width="97" height="101" patternUnits="userSpaceOnUse"><path d="M1.5 0v3M3.5 28v2M3.5 38v2M3.5 58v3M4.5 87v2M1 93.5h1M8 15.5h1M9.5 16v3M5.5 30v2M6.5 61v3M7 87.5h1M7.5 89v2M7 98.5h1M11.5 0v3M14.5 14v3M14.5 29v3M13.5 36v3M12 41.5h1M13 58.5h1M11.5 70v2M14 86.5h1M18.5 12v3M19.5 20v2M16.5 25v3M18.5 32v2M20 34.5h1M17.5 71v2M18 80.5h1M18.5 98v2M25 31.5h1M23.5 62v2M22 70.5h1M23.5 74v2M23.5 86v3M25 98.5h1M28.5 0v3M27.5 12v2M29.5 26v2M30.5 56v2M29.5 76v2M27 83.5h1M36.5 9v3M35 21.5h1M35 35.5h1M32 40.5h1M32 64.5h1M38.5 14v2M37.5 20v3M41.5 26v3M38.5 57v3M38 71.5h1M37 91.5h1M47 5.5h1M47.5 42v3M45 66.5h1M46 68.5h1M48.5 3v3M51 17.5h1M52 52.5h1M49.5 64v3M52 68.5h1M51.5 88v2M50 90.5h1M56.5 52v3M58.5 56v3M57 82.5h1M54 84.5h1M55.5 98v2M60.5 6v2M59.5 34v2M62.5 50v2M60 57.5h1M61.5 65v2M59 73.5h1M62.5 82v3M65.5 40v3M68 49.5h1M68 54.5h1M64.5 90v2M67 96.5h1M70.5 13v2M71 17.5h1M73.5 25v2M70.5 62v3M74.5 69v3M78 40.5h1M76 48.5h1M75.5 75v2M79 90.5h1M83.5 0v3M81 42.5h1M81.5 46v3M82.5 51v3M83 73.5h1M84.5 98v3M88.5 15v2M90.5 34v3M88.5 70v3M89 74.5h1M88.5 81v2M90.5 91v2M95 4.5h1M95.5 16v3M95.5 68v2M92 95.5h1" stroke="#2a2a2a" stroke-width="1" fill="none" shape-rendering="crispEdges"/><path d="M0 5.5h1M4 22.5h1M2.5 42v2M1 46.5h1M0 51.5h1M4.5 75v3M6 25.5h1M8.5 49v2M5 59.5h1M6.5 67v2M15 7.5h1M12 21.5h1M14.5 23v3M13.5 45v2M14 79.5h1M12.5 90v3M12 98.5h1M16 0.5h1M18.5 39v2M16.5 57v2M19.5 64v2M18 88.5h1M21.5 0v2M25 7.5h1M25.5 17v3M22.5 26v2M25 34.5h1M25.5 45v3M25.5 51v3M25.5 57v2M23.5 89v2M29 7.5h1M27 18.5h1M29 42.5h1M30.5 53v2M27.5 71v3M29.5 97v3M36 2.5h1M35.5 24v2M35.5 29v3M35.5 48v3M32 58.5h1M36.5 84v2M33.5 93v3M36 98.5h1M41.5 6v2M40.5 29v2M39 36.5h1M41.5 47v2M41.5 53v3M38 62.5h1M40.5 73v2M41 79.5h1M41.5 87v2M46.5 18v3M45.5 24v3M44 34.5h1M43.5 59v3M44.5 72v2M43 82.5h1M44.5 85v3M47.5 91v3M43.5 98v3M51.5 12v3M52 25.5h1M49.5 29v2M52.5 39v3M52.5 45v2M48.5 60v2M48 96.5h1M57 0.5h1M56.5 19v2M56.5 36v2M56 39.5h1M56 73.5h1M56.5 92v2M60 4.5h1M62.5 24v3M63.5 41v2M60.5 46v3M60.5 87v2M63 93.5h1M62.5 97v3M68.5 14v2M65.5 19v3M66.5 24v2M68.5 28v3M66.5 37v2M67 62.5h1M73.5 29v2M73.5 33v2M73 54.5h1M72.5 57v2M72.5 74v2M72.5 79v3M73 85.5h1M71.5 97v2M76 24.5h1M75 29.5h1M78.5 36v3M79.5 51v3M77.5 63v3M76 71.5h1M75.5 81v3M79.5 86v3M81.5 13v3M81 56.5h1M82.5 63v2M84 68.5h1M84 78.5h1M87 8.5h1M87 18.5h1M86.5 30v2M88 42.5h1M86.5 48v2M89 54.5h1M88 58.5h1M88 62.5h1M88.5 96v3M91.5 29v3M93.5 35v2M95 42.5h1M93.5 45v3M95 54.5h1M93 59.5h1M91 73.5h1M94 80.5h1M95 87.5h1M95 89.5h1" stroke="#4a4a4a" stroke-width="1" fill="none" shape-rendering="crispEdges"/><path d="M3.5 14v3M1.5 20v2M1.5 63v3M3.5 67v3M1.5 83v2M0 96.5h1M6.5 2v2M9.5 6v2M6.5 36v3M5.5 39v3M9.5 52v2M9.5 75v3M6.5 80v2M15 53.5h1M14.5 62v2M14.5 76v3M17.5 7v2M20.5 45v3M19 51.5h1M16 76.5h1M18.5 91v2M24.5 15v3M24 43.5h1M23 78.5h1M28.5 31v2M28 34.5h1M30 47.5h1M30.5 63v3M27.5 88v2M27.5 92v2M33.5 13v2M34.5 54v2M36.5 70v3M36.5 76v2M33 79.5h1M37 1.5h1M38 42.5h1M41.5 98v2M44 4.5h1M46 15.5h1M43.5 32v2M46 49.5h1M43.5 52v2M52.5 6v2M49.5 36v3M50 76.5h1M49.5 80v3M58 5.5h1M56.5 13v2M56.5 22v2M55 28.5h1M56 44.5h1M54 64.5h1M58.5 70v3M59 15.5h1M62.5 17v3M62.5 29v3M61.5 69v2M65 3.5h1M65.5 7v3M66 58.5h1M68.5 69v3M67.5 75v2M68.5 82v3M66.5 86v2M70.5 2v2M73.5 7v2M72 41.5h1M73 48.5h1M70 93.5h1M78.5 2v3M75.5 7v3M78.5 14v2M79.5 20v2M77 56.5h1M75.5 96v2M80.5 6v3M82 18.5h1M80 25.5h1M83.5 31v3M82.5 37v2M83.5 85v3M82.5 90v2M90 3.5h1M88.5 23v2M87 85.5h1M95.5 6v2M92.5 13v2M93.5 26v3M94 66.5h1" stroke="#333333" stroke-width="1" fill="none" shape-rendering="crispEdges"/></pattern><pattern id="yB" width="36" height="40" patternUnits="userSpaceOnUse" patternTransform="matrix(1,0.21,0,1,29.75,5.1)"><path d="M2 10h16M20 30h16" stroke="#0a0a00" stroke-width="1" shape-rendering="crispEdges"/></pattern><pattern id="yR" width="36" height="60" patternUnits="userSpaceOnUse" patternTransform="matrix(1,0.2,0,1,24.5,52.4)"><path d="M2 10h16" stroke="#0a0a00" stroke-width="1" shape-rendering="crispEdges"/></pattern><pattern id="yF" width="36" height="40" patternUnits="userSpaceOnUse" patternTransform="matrix(0.33,-0.315,0,1,0,6)"><path d="M2 10h16M20 30h16" stroke="#0a0a00" stroke-width="1" shape-rendering="crispEdges"/></pattern><pattern id="rB" width="46" height="32.5" patternUnits="userSpaceOnUse" patternTransform="matrix(1,0.21,0,1,6,0)"><path d="M4 3.5 c0.5 5.5 2.5 8 4 8 c2 0 2.5 -3.5 3.5 -5.5 c1 -2.5 2 -4 3.5 -3.5 c1.5 0.5 2.5 2.5 3 5.5 M8 19 l7.5 11 M31 2.5 l7.5 11 M27 20 c0.5 5.5 2.5 8 4 8 c2 0 2.5 -3.5 3.5 -5.5 c1 -2.5 2 -4 3.5 -3.5 c1.5 0.5 2.5 2.5 3 5.5" stroke="#161616" stroke-width="1.1" fill="none"/></pattern><pattern id="rR" width="46" height="32.5" patternUnits="userSpaceOnUse" patternTransform="matrix(1,0.2,0,1,11,5)"><path d="M4 3.5 c0.5 5.5 2.5 8 4 8 c2 0 2.5 -3.5 3.5 -5.5 c1 -2.5 2 -4 3.5 -3.5 c1.5 0.5 2.5 2.5 3 5.5 M8 19 l7.5 11 M31 2.5 l7.5 11 M27 20 c0.5 5.5 2.5 8 4 8 c2 0 2.5 -3.5 3.5 -5.5 c1 -2.5 2 -4 3.5 -3.5 c1.5 0.5 2.5 2.5 3 5.5" stroke="#161616" stroke-width="1.1" fill="none"/></pattern><pattern id="rM" width="46" height="32.5" patternUnits="userSpaceOnUse" patternTransform="matrix(1,0.2,0,1,3,9)"><path d="M4 10 c0.5 -5.5 2.5 -8 4 -8 c2 0 2.5 3.5 3.5 5.5 c1 2.5 2 4 3.5 3.5 c1.5 -0.5 2.5 -2.5 3 -5.5 M8 30 l7.5 -11 M31 13.5 l7.5 -11 M27 27 c0.5 -5.5 2.5 -8 4 -8 c2 0 2.5 3.5 3.5 5.5 c1 2.5 2 4 3.5 3.5 c1.5 -0.5 2.5 -2.5 3 -5.5" stroke="#161616" stroke-width="1.1" fill="none"/></pattern><pattern id="hB" width="12.0" height="12.021" patternUnits="userSpaceOnUse" patternTransform="translate(0,0) rotate(-45)"><rect width="12.0" height="13.021" fill="#e6e6e6"/><path d="M0 6.01h9.4" stroke="#cacaca" stroke-width="1"/></pattern><pattern id="hR" width="12.4" height="9.192" patternUnits="userSpaceOnUse" patternTransform="translate(0,0) rotate(-45)"><rect width="12.4" height="10.192" fill="#e6e6e6"/><path d="M0 4.60h9.4" stroke="#cacaca" stroke-width="1"/></pattern><pattern id="lgF" width="6" height="11" patternUnits="userSpaceOnUse" patternTransform="matrix(1,0.6,0,1,0,0)"><rect x="1" y="1" width="1" height="1.2" fill="#cdcdcd"/><rect x="4" y="6.5" width="1" height="1.2" fill="#d2d2d2"/></pattern><pattern id="pB" width="22" height="18" patternUnits="userSpaceOnUse" patternTransform="matrix(1,0.3,0,1,0,0)"><rect width="22" height="18" fill="#ff8c8c"/><path d="M0 18 L11 0 L22 18 M0 0 L11 18 L22 0" stroke="#1a1010" stroke-width="1" fill="none" shape-rendering="crispEdges"/></pattern><pattern id="pR" width="22" height="18" patternUnits="userSpaceOnUse" patternTransform="matrix(1,0.28,0,1,0,4)"><rect width="22" height="18" fill="#ff8c8c"/><path d="M0 18 L11 0 L22 18 M0 0 L11 18 L22 0" stroke="#1a1010" stroke-width="1" fill="none" shape-rendering="crispEdges"/></pattern><clipPath id="vp"><rect x="64" y="98" width="1709" height="597"/></clipPath></defs><g clip-path="url(#vp)"><path d="M590 97.5 L937 169" stroke="#222" stroke-width="1"/><polygon points="444.0,126.0 471.5,137.1 503.0,149.1 534.5,160.4 600.0,178.3 663.0,196.5 720.0,216.0 740.0,223.7 757.8,229.9 772.0,235.0 772.0,245.0 444.0,170.0" fill="#ffd966" /><polygon points="444.0,126.0 471.5,137.1 503.0,149.1 534.5,160.4 600.0,178.3 663.0,196.5 720.0,216.0 740.0,223.7 757.8,229.9 772.0,235.0 772.0,245.0 444.0,170.0" fill="url(#yB)"/><polygon points="444.0,126.0 471.5,137.1 503.0,149.1 534.5,160.4 600.0,178.3 663.0,196.5 720.0,216.0 740.0,223.7 757.8,229.9 772.0,235.0 772.0,245.0 444.0,170.0" fill="url(#dY)"/><polygon points="444.0,170.0 772.0,245.0 772.0,318.5 705.0,305.0 444.0,252.5" fill="url(#hB)" /><polygon points="444.0,252.5 705.0,305.0 772.0,318.5 772.0,349.0 680.0,330.0 444.0,281.0" fill="#ffd966" /><polygon points="444.0,252.5 705.0,305.0 772.0,318.5 772.0,349.0 680.0,330.0 444.0,281.0" fill="url(#yB)"/><polygon points="444.0,252.5 705.0,305.0 772.0,318.5 772.0,349.0 680.0,330.0 444.0,281.0" fill="url(#dY)"/><polygon points="444.0,281.0 680.0,330.0 772.0,349.0 772.0,465.0 444.0,396.0" fill="#828282" /><polygon points="444.0,281.0 680.0,330.0 772.0,349.0 772.0,465.0 444.0,396.0" fill="url(#rB)"/><polygon points="444.0,281.0 680.0,330.0 772.0,349.0 772.0,465.0 444.0,396.0" fill="url(#dR)"/><polygon points="444.0,126.0 444.0,133.0 465.0,139.0 484.0,144.2 503.0,150.8 534.5,161.2 600.0,179.0 680.0,202.6 680.0,202.0 600.0,178.3 534.5,160.4 503.0,149.1 471.5,137.1" fill="url(#pB)" /><polygon points="442.2,116.7 447.5,114.8 503.0,135.1 560.0,155.4 600.0,166.0 663.0,185.2 720.0,205.0 757.8,217.0 772.0,222.0 772.0,235.0 757.8,229.9 740.0,223.7 720.0,216.0 663.0,196.5 600.0,178.3 534.5,160.4 503.0,149.1 471.5,137.1 444.0,126.0 441.3,124.5" fill="#7f4d9c" /><polygon points="442.2,116.7 447.5,114.8 503.0,135.1 560.0,155.4 600.0,166.0 663.0,185.2 720.0,205.0 757.8,217.0 772.0,222.0 772.0,225.3 757.8,220.3 720.0,208.3 663.0,188.5 600.0,169.3 560.0,158.7 503.0,138.4 447.5,118.1 442.0,119.5" fill="#4d2f62" /><polygon points="1220.4,369.4 1225.0,374.5 1225.0,399.0 1220.4,394.4" fill="#008282" /><rect x="1225" y="374" width="25.6" height="25" fill="#00e4e4"/><polygon points="1220.4,369.4 1245.6,368.4 1250.6,374.0 1225.0,374.5" fill="#006666" /><polygon points="770.0,236.0 778.3,237.0 792.5,242.0 817.5,260.0 842.5,278.0 867.5,297.5 880.0,305.0 917.5,318.8 967.5,332.0 1020.0,346.2 1060.0,358.0 1100.0,369.0 1185.0,389.4 1247.5,407.0 1300.0,428.8 1320.0,437.5 1400.0,459.0 1525.0,480.0 1532.0,481.5 1543.0,483.0 1543.0,620.5 1340.0,579.0 1100.0,529.0 770.0,465.0" fill="#828282" /><polygon points="770.0,236.0 778.3,237.0 792.5,242.0 817.5,260.0 842.5,278.0 867.5,297.5 880.0,305.0 917.5,318.8 967.5,332.0 1020.0,346.2 1060.0,358.0 1100.0,369.0 1185.0,389.4 1247.5,407.0 1300.0,428.8 1320.0,437.5 1400.0,459.0 1525.0,480.0 1532.0,481.5 1543.0,483.0 1543.0,620.5 1340.0,579.0 1100.0,529.0 770.0,465.0" fill="url(#rR)"/><polygon points="770.0,236.0 778.3,237.0 792.5,242.0 817.5,260.0 842.5,278.0 867.5,297.5 880.0,305.0 917.5,318.8 967.5,332.0 1020.0,346.2 1060.0,358.0 1100.0,369.0 1185.0,389.4 1247.5,407.0 1300.0,428.8 1320.0,437.5 1400.0,459.0 1525.0,480.0 1532.0,481.5 1543.0,483.0 1543.0,620.5 1340.0,579.0 1100.0,529.0 770.0,465.0" fill="url(#dR)"/><polygon points="1308.0,431.0 1320.0,437.5 1400.0,459.0 1525.0,480.0 1543.0,483.0 1543.0,620.5 1424.0,596.5 1412.0,590.0 1320.0,460.0" fill="#828282" /><polygon points="1308.0,431.0 1320.0,437.5 1400.0,459.0 1525.0,480.0 1543.0,483.0 1543.0,620.5 1424.0,596.5 1412.0,590.0 1320.0,460.0" fill="url(#rM)"/><polygon points="1308.0,431.0 1320.0,437.5 1400.0,459.0 1525.0,480.0 1543.0,483.0 1543.0,620.5 1424.0,596.5 1412.0,590.0 1320.0,460.0" fill="url(#dR)"/><polygon points="770.0,321.0 1060.0,381.0 1166.0,402.5 1210.0,412.5 1247.5,425.0 1300.0,438.8 1350.0,454.0 1425.0,465.0 1450.0,470.0 1450.0,470.0 1425.0,467.5 1325.0,462.0 1300.0,456.0 1185.0,437.5 1060.0,411.0 770.0,349.0" fill="#ffd966" /><polygon points="770.0,321.0 1060.0,381.0 1166.0,402.5 1210.0,412.5 1247.5,425.0 1300.0,438.8 1350.0,454.0 1425.0,465.0 1450.0,470.0 1450.0,470.0 1425.0,467.5 1325.0,462.0 1300.0,456.0 1185.0,437.5 1060.0,411.0 770.0,349.0" fill="url(#yR)"/><polygon points="770.0,321.0 1060.0,381.0 1166.0,402.5 1210.0,412.5 1247.5,425.0 1300.0,438.8 1350.0,454.0 1425.0,465.0 1450.0,470.0 1450.0,470.0 1425.0,467.5 1325.0,462.0 1300.0,456.0 1185.0,437.5 1060.0,411.0 770.0,349.0" fill="url(#dY)"/><polygon points="770.0,249.5 775.0,248.2 817.0,260.0 842.5,278.0 867.5,297.5 880.0,305.0 917.5,318.8 935.0,323.5 1010.0,347.0 1060.0,362.0 1097.5,372.5 1135.0,390.0 1166.0,402.5 1060.0,381.0 770.0,321.0" fill="url(#hR)" /><polygon points="770.0,236.0 778.3,237.0 792.5,242.0 817.5,260.0 775.0,248.2 770.0,249.5" fill="#ffd966" /><polygon points="770.0,236.0 778.3,237.0 792.5,242.0 817.5,260.0 775.0,248.2 770.0,249.5" fill="url(#yR)"/><polygon points="770.0,236.0 778.3,237.0 792.5,242.0 817.5,260.0 775.0,248.2 770.0,249.5" fill="url(#dY)"/><polygon points="1097.5,372.5 1135.0,383.0 1172.5,393.8 1210.0,405.6 1247.5,416.0 1285.0,426.0 1312.0,437.0 1400.0,459.0 1475.0,472.5 1475.0,472.5 1425.0,465.0 1350.0,454.0 1300.0,438.8 1247.5,425.0 1210.0,412.5 1166.0,402.5 1135.0,390.0 1097.5,372.5" fill="#fff0c0" /><path d="M1132.5 382.3V388.8M1152.5 388.0V397.1M1172 393.6V403.9M1184 397.4V406.6M1191 399.6V408.2M1211 405.9V412.8M1224 409.5V417.2M1230.6 411.3V419.4M1250.6 416.8V425.8M1264 420.4V429.3M1270 422.0V430.9M1290 428.0V436.1M1310 436.2V441.8M1330 441.5V447.9M1350 446.5V454.0M1369 451.2V456.8M1388 456.0V459.6M1408 460.4V462.5M1427 463.9V465.3" stroke="#1c1c1c" stroke-width="0.9" fill="none"/><polygon points="967.5,332.0 1020.0,346.2 1060.0,358.0 1100.0,369.0 1185.0,389.4 1247.5,407.0 1300.0,428.8 1320.0,437.5 1320.0,437.5 1312.0,436.5 1285.0,426.0 1247.5,416.0 1210.0,405.6 1172.5,393.8 1135.0,383.0 1097.5,372.5 1060.0,362.0 1010.0,348.0 935.0,324.0 922.5,320.0" fill="url(#pR)" /><polygon points="1455.0,468.5 1525.0,480.0 1532.0,481.5 1532.0,487.0 1500.0,480.0" fill="url(#pR)" /><polygon points="1355.0,504.0 1534.0,530.0 1534.0,549.0" fill="#ffd966" /><polygon points="1355.0,504.0 1534.0,530.0 1534.0,549.0" fill="url(#yR)"/><polygon points="1355.0,504.0 1534.0,530.0 1534.0,549.0" fill="url(#dY)"/><path d="M1355 504 L1534 530.5" stroke="#d8d8d8" stroke-width="1.2"/><path d="M1067.5 428.75 L1222.5 459 L1534 512.5" stroke="#1e1e1e" stroke-width="0.8" fill="none"/><polygon points="772.6,229.2 772.6,236.6 768.2,243.4 692.5,340.0 657.5,381.0 642.5,406.0 632.5,426.0 615.0,460.0 605.0,477.5 595.0,492.5 582.5,502.5 562.5,520.6 557.5,520.6 557.5,665.0 668.8,560.0 770.0,465.0 772.0,349.0 772.5,230.0" fill="#828282" /><polygon points="772.6,229.2 772.6,236.6 768.2,243.4 692.5,340.0 657.5,381.0 642.5,406.0 632.5,426.0 615.0,460.0 605.0,477.5 595.0,492.5 582.5,502.5 562.5,520.6 557.5,520.6 557.5,665.0 668.8,560.0 770.0,465.0 772.0,349.0 772.5,230.0" fill="url(#dF)"/><polygon points="772.6,229.2 772.6,236.6 768.2,243.4 692.5,340.0 657.5,381.0 642.5,406.0 632.5,426.0 615.0,460.0 605.0,477.5 595.0,492.5 582.5,502.5 562.5,520.6 557.5,520.6 557.5,587.0 580.9,563.0 590.3,550.4 597.9,537.8 604.8,525.2 613.0,512.6 622.8,498.0 631.7,485.4 638.0,472.8 643.6,460.2 654.3,447.6 671.3,435.0 675.0,432.5 689.0,426.0 718.0,397.5 737.5,376.0 749.0,359.0 762.5,356.0 770.0,349.0" fill="#ffd966" /><polygon points="772.6,229.2 772.6,236.6 768.2,243.4 692.5,340.0 657.5,381.0 642.5,406.0 632.5,426.0 615.0,460.0 605.0,477.5 595.0,492.5 582.5,502.5 562.5,520.6 557.5,520.6 557.5,587.0 580.9,563.0 590.3,550.4 597.9,537.8 604.8,525.2 613.0,512.6 622.8,498.0 631.7,485.4 638.0,472.8 643.6,460.2 654.3,447.6 671.3,435.0 675.0,432.5 689.0,426.0 718.0,397.5 737.5,376.0 749.0,359.0 762.5,356.0 770.0,349.0" fill="url(#yF)"/><polygon points="772.6,229.2 772.6,236.6 768.2,243.4 692.5,340.0 657.5,381.0 642.5,406.0 632.5,426.0 615.0,460.0 605.0,477.5 595.0,492.5 582.5,502.5 562.5,520.6 557.5,520.6 557.5,587.0 580.9,563.0 590.3,550.4 597.9,537.8 604.8,525.2 613.0,512.6 622.8,498.0 631.7,485.4 638.0,472.8 643.6,460.2 654.3,447.6 671.3,435.0 675.0,432.5 689.0,426.0 718.0,397.5 737.5,376.0 749.0,359.0 762.5,356.0 770.0,349.0" fill="url(#dY)"/><polygon points="770.0,250.0 755.0,270.0 745.0,282.5 735.0,297.5 727.5,315.0 720.0,329.0 711.7,349.4 700.0,359.0 688.4,368.8 672.0,388.0 654.5,407.5 641.0,425.0 632.3,435.0 626.0,447.6 622.8,460.2 619.0,472.8 613.4,485.4 607.1,498.0 597.9,512.6 587.8,525.2 572.7,537.8 562.0,550.4 557.5,552.6 557.5,565.0 560.7,563.0 570.8,550.4 579.6,537.8 592.8,525.2 603.5,512.6 612.8,498.0 620.3,485.4 626.0,472.8 632.3,460.2 640.5,447.6 650.0,435.0 662.5,427.5 689.0,421.0 718.0,395.0 735.0,371.0 749.0,351.0 762.0,340.0 770.0,321.0" fill="#e6e6e6" /><polygon points="770.0,250.0 755.0,270.0 745.0,282.5 735.0,297.5 727.5,315.0 720.0,329.0 711.7,349.4 700.0,359.0 688.4,368.8 672.0,388.0 654.5,407.5 641.0,425.0 632.3,435.0 626.0,447.6 622.8,460.2 619.0,472.8 613.4,485.4 607.1,498.0 597.9,512.6 587.8,525.2 572.7,537.8 562.0,550.4 557.5,552.6 557.5,565.0 560.7,563.0 570.8,550.4 579.6,537.8 592.8,525.2 603.5,512.6 612.8,498.0 620.3,485.4 626.0,472.8 632.3,460.2 640.5,447.6 650.0,435.0 662.5,427.5 689.0,421.0 718.0,395.0 735.0,371.0 749.0,351.0 762.0,340.0 770.0,321.0" fill="url(#lgF)" /><polygon points="745.0,268.0 725.0,295.0 692.5,340.0 657.5,381.0 642.5,406.0 632.5,426.0 636.0,425.0 643.9,407.5 660.8,388.0 678.8,368.8 700.0,349.4 706.0,340.0 725.0,310.0 738.0,286.0" fill="#ffc88c" /><polygon points="562.5,520.6 582.5,502.5 588.8,498.0 600.8,485.4 607.0,472.8 609.0,468.0 609.6,472.8 604.6,485.4 595.1,498.0 584.0,512.6 569.5,525.2 557.5,535.3 557.5,520.6" fill="#ff8c8c" /><polygon points="678.9,469.6 661.3,485.4 646.8,498.0 631.3,512.6 622.4,525.2 614.3,537.8 605.4,550.4 595.4,563.0 582.5,579.0 557.5,607.5 557.5,622.0 593.8,579.0 605.4,563.0 614.9,550.4 623.0,537.8 631.3,525.2 639.4,512.6 653.1,498.0 668.2,485.4 678.9,469.6" fill="#ffd966" /><polygon points="678.9,469.6 661.3,485.4 646.8,498.0 631.3,512.6 622.4,525.2 614.3,537.8 605.4,550.4 595.4,563.0 582.5,579.0 557.5,607.5 557.5,622.0 593.8,579.0 605.4,563.0 614.9,550.4 623.0,537.8 631.3,525.2 639.4,512.6 653.1,498.0 668.2,485.4 678.9,469.6" fill="url(#yF)"/><polygon points="678.9,469.6 661.3,485.4 646.8,498.0 631.3,512.6 622.4,525.2 614.3,537.8 605.4,550.4 595.4,563.0 582.5,579.0 557.5,607.5 557.5,622.0 593.8,579.0 605.4,563.0 614.9,550.4 623.0,537.8 631.3,525.2 639.4,512.6 653.1,498.0 668.2,485.4 678.9,469.6" fill="url(#dY)"/><polygon points="678.9,469.6 670.6,484.6 655.2,500.0 653.1,498.0 668.2,485.4" fill="#d4d4d4" /><polygon points="757.8,213.0 762.4,219.0 762.4,237.5 757.8,232.0" fill="#00a3a3" /><rect x="762.4" y="218.5" width="25.4" height="19" fill="#00e4e4"/><polygon points="757.8,213.0 782.8,212.0 787.8,218.5 762.4,219.0" fill="#006666" /><polygon points="772.6,236.0 778.3,236.0 783.8,238.5 783.8,243.8 768.2,243.8" fill="#00e4e4" /><polygon points="778.3,228.6 796.0,232.0 830.0,255.0 867.5,282.5 880.0,292.0 917.5,307.5 967.5,320.6 1020.0,335.0 1060.0,346.2 1100.0,357.0 1185.0,379.5 1200.0,383.5 1220.0,389.0 1250.0,397.0 1300.0,417.5 1320.0,426.0 1400.0,449.0 1525.0,470.0 1532.0,471.5 1532.0,481.5 1525.0,480.0 1400.0,459.0 1320.0,437.5 1300.0,428.8 1247.5,407.0 1185.0,389.4 1100.0,369.0 1060.0,358.0 1020.0,346.2 967.5,332.0 917.5,318.8 880.0,305.0 867.5,297.5 842.5,278.0 817.5,260.0 792.5,242.0 778.3,237.0" fill="#7f4d9c" /><polygon points="778.3,228.6 796.0,232.0 830.0,255.0 867.5,282.5 880.0,292.0 917.5,307.5 967.5,320.6 1020.0,335.0 1060.0,346.2 1100.0,357.0 1185.0,379.5 1200.0,383.5 1220.0,389.0 1250.0,397.0 1300.0,417.5 1320.0,426.0 1400.0,449.0 1525.0,470.0 1532.0,471.5 1532.0,474.9 1525.0,473.4 1400.0,452.4 1320.0,429.4 1300.0,420.9 1250.0,400.4 1220.0,392.4 1200.0,386.9 1185.0,382.9 1100.0,360.4 1060.0,349.6 1020.0,338.4 967.5,324.0 917.5,310.9 880.0,295.4 867.5,285.9 830.0,258.4 796.0,235.4 778.3,232.0" fill="#4d2f62" /><polygon points="763.4,229.2 676.0,340.0 636.0,395.0 621.0,427.5 607.5,452.5 595.0,472.5 587.5,485.0 572.5,495.6 553.8,512.5 562.5,520.6 582.5,502.5 595.0,492.5 605.0,477.5 615.0,460.0 632.5,426.0 642.5,406.0 657.5,381.0 692.5,340.0 768.2,243.4 772.6,236.6 772.6,229.2" fill="#4a2a5b" /><polygon points="553.8,512.5 562.5,512.5 562.5,520.6 553.8,520.6" fill="#9a5fc0" /><text x="1245" y="380" font-family="Liberation Sans, sans-serif" font-size="11" fill="#c414c4">BH2</text><text x="781.6" y="224.2" font-family="Liberation Sans, sans-serif" font-size="11" fill="#c414c4">BH1</text><rect x="770" y="249.5" width="6" height="71" fill="#eeeeee"/><rect x="770" y="320.5" width="6" height="21" fill="#ffe38a"/><rect x="770" y="341.5" width="6" height="35" fill="#8f8f8f"/><path d="M771.5 366v10.5h4" stroke="#c4c4c4" fill="none"/><rect x="749.5" y="338" width="12" height="8" fill="#ffc88c"/><rect x="749.5" y="346" width="12" height="15" fill="#ffd966"/><rect x="749.5" y="361" width="12" height="55.5" fill="#f0f0f0"/><rect x="749.5" y="416.5" width="12" height="51.0" fill="#8c8c8c"/><path d="M750 338V416M761 338V416" stroke="#8a7a5a" stroke-width="0.8" opacity="0.6"/><path d="M750 416V467H761V416M756 455q3 -4 4 4" stroke="#bdbdbd" stroke-width="1" fill="none"/><polygon points="740.0,307.0 744.0,313.0 744.0,338.0 740.0,332.5" fill="#00a3a3" /><rect x="744" y="312.5" width="26" height="25.5" fill="#00e4e4"/><polygon points="740.0,307.0 765.6,306.0 770.0,312.5 744.0,313.0" fill="#006666" /><text x="763.4" y="319.4" font-family="Liberation Sans, sans-serif" font-size="11" fill="#c414c4">BH5</text><rect x="770" y="306" width="6" height="14.5" fill="#efefef"/><rect x="695.3" y="409" width="20.6" height="4" fill="#ffc88c"/><rect x="689.5" y="408" width="5.8" height="4" fill="#ffc88c"/><rect x="689.5" y="408" width="5.8" height="4" fill="#000" opacity="0.22"/><rect x="695.3" y="413" width="20.6" height="4" fill="#ffd966"/><rect x="689.5" y="412" width="5.8" height="4" fill="#ffd966"/><rect x="689.5" y="412" width="5.8" height="4" fill="#000" opacity="0.22"/><rect x="695.3" y="417" width="20.6" height="29" fill="#d9d9d9"/><rect x="689.5" y="416" width="5.8" height="29" fill="#d9d9d9"/><rect x="689.5" y="416" width="5.8" height="29" fill="#000" opacity="0.22"/><rect x="695.3" y="446" width="20.6" height="16" fill="#ffd966"/><rect x="689.5" y="445" width="5.8" height="16" fill="#ffd966"/><rect x="689.5" y="445" width="5.8" height="16" fill="#000" opacity="0.22"/><rect x="695.3" y="462" width="20.6" height="41" fill="#7c7c7c"/><rect x="689.5" y="461" width="5.8" height="41" fill="#7c7c7c"/><rect x="689.5" y="461" width="5.8" height="41" fill="#000" opacity="0.22"/><rect x="695.3" y="503" width="20.6" height="7" fill="#ffd966"/><rect x="689.5" y="502" width="5.8" height="7" fill="#ffd966"/><rect x="689.5" y="502" width="5.8" height="7" fill="#000" opacity="0.22"/><rect x="695.3" y="510" width="20.6" height="9" fill="#7c7c7c"/><rect x="689.5" y="509" width="5.8" height="9" fill="#7c7c7c"/><rect x="689.5" y="509" width="5.8" height="9" fill="#000" opacity="0.22"/><path d="M689.8 408V518M695.3 409V519M716.4 409V519" stroke="#5e5e5e" stroke-width="1.1"/><path d="M699 422 l9 8 M703 434 l9 8" stroke="#bdbdbd" stroke-width="0.8"/><path d="M698 468 q5 -6 10 -2 M712 468 q3 -4 5 0 M698 488 l8 7 M715 486 q-5 4 0 8 M698 513 l6 4 M715 511 q-4 3 0 6" stroke="#111" stroke-width="1.2" fill="none"/><polygon points="688.0,379.4 692.0,384.5 692.0,409.0 688.0,404.4" fill="#00a3a3" /><rect x="692" y="384" width="26" height="25" fill="#00e4e4"/><polygon points="688.0,379.4 713.6,378.4 718.0,384.0 692.0,384.5" fill="#006666" /><text x="711.6" y="390.6" font-family="Liberation Sans, sans-serif" font-size="11" fill="#c414c4">BH6</text><rect x="536" y="499" width="13" height="17" fill="#ffd966"/><rect x="536" y="516" width="13" height="9" fill="#ededed"/><rect x="536" y="525" width="13" height="21" fill="#ffd966"/><rect x="536" y="546" width="13" height="19.5" fill="#8a8a8a"/><rect x="536" y="565.5" width="13" height="13.5" fill="#ffd966"/><rect x="536" y="579" width="13" height="36" fill="#858585"/><path d="M536.5 499V613M548.5 499V613" stroke="#9a9a9a" stroke-width="1.4"/><polygon points="527.5,469.3 531.0,474.0 531.0,499.0 527.5,494.8" fill="#00a3a3" /><rect x="531" y="473.5" width="26.5" height="25.5" fill="#00e4e4"/><polygon points="527.5,469.3 553.6,468.3 557.5,473.5 531.0,474.0" fill="#006666" /><text x="551" y="479.4" font-family="Liberation Sans, sans-serif" font-size="11" fill="#c414c4">BH4</text><rect x="972.5" y="548" width="21.5" height="4" fill="#ffc88c"/><rect x="967.0" y="547" width="5.5" height="4" fill="#ffc88c"/><rect x="967.0" y="547" width="5.5" height="4" fill="#000" opacity="0.22"/><rect x="972.5" y="552" width="21.5" height="28" fill="#ffd966"/><rect x="967.0" y="551" width="5.5" height="28" fill="#ffd966"/><rect x="967.0" y="551" width="5.5" height="28" fill="#000" opacity="0.22"/><rect x="972.5" y="580" width="21.5" height="35" fill="#828282"/><rect x="967.0" y="579" width="5.5" height="35" fill="#828282"/><rect x="967.0" y="579" width="5.5" height="35" fill="#000" opacity="0.22"/><rect x="972.5" y="615" width="21.5" height="15.5" fill="#ffd966"/><rect x="967.0" y="614" width="5.5" height="15.5" fill="#ffd966"/><rect x="967.0" y="614" width="5.5" height="15.5" fill="#000" opacity="0.22"/><path d="M975 586 q3 -5 6 0 q-1 4 -5 3 M985 585 l8 8 M988 606 q5 0 4 6" stroke="#111" stroke-width="1.1" fill="none"/><path d="M974.5 593.8h1M977.5 598.3h1M983.4 557.9h1M969.3 615.8h1M975.0 570.6h1M991.9 588.3h1M988.2 588.7h1M983.7 564.3h1M983.6 618.1h1M981.0 608.6h1M984.4 557.8h1M986.4 597.3h1M975.9 555.3h1M988.9 588.5h1M985.5 618.9h1M985.4 622.1h1M978.1 613.1h1M979.2 623.2h1M989.2 560.3h1M972.1 569.3h1M991.2 585.7h1M983.4 575.6h1" stroke="#1a1a1a" stroke-width="1.1" fill="none"/><polygon points="964.0,518.0 970.5,523.5 970.5,548.5 964.0,543.5" fill="#007272" /><rect x="970.5" y="523" width="25.5" height="25.5" fill="#00e4e4"/><polygon points="964.0,518.0 989.1,517.0 996.0,523.0 970.5,523.5" fill="#006666" /><text x="989" y="529" font-family="Liberation Sans, sans-serif" font-size="11" fill="#c414c4">N</text><rect x="1484" y="599" width="21.5" height="3.5" fill="#ffc88c"/><rect x="1478" y="598" width="6" height="3.5" fill="#ffc88c"/><rect x="1478" y="598" width="6" height="3.5" fill="#000" opacity="0.22"/><rect x="1484" y="602.5" width="21.5" height="4.0" fill="#ffd966"/><rect x="1478" y="601.5" width="6" height="4.0" fill="#ffd966"/><rect x="1478" y="601.5" width="6" height="4.0" fill="#000" opacity="0.22"/><rect x="1484" y="606.5" width="21.5" height="4.5" fill="#e8e8e8"/><rect x="1478" y="605.5" width="6" height="4.5" fill="#e8e8e8"/><rect x="1478" y="605.5" width="6" height="4.5" fill="#000" opacity="0.22"/><rect x="1484" y="611" width="21.5" height="24" fill="#828282"/><rect x="1478" y="610" width="6" height="24" fill="#828282"/><rect x="1478" y="610" width="6" height="24" fill="#000" opacity="0.22"/><rect x="1484" y="635" width="21.5" height="22" fill="#ffd966"/><rect x="1478" y="634" width="6" height="22" fill="#ffd966"/><rect x="1478" y="634" width="6" height="22" fill="#000" opacity="0.22"/><path d="M1487 615 q3 -4 5 0 q0 3 -4 3 M1495 616 l8 8" stroke="#111" stroke-width="1.1" fill="none"/><path d="M1485.2 653.1h1M1482.9 639.9h1M1482.0 616.6h1M1503.0 614.7h1M1494.8 627.4h1M1490.4 629.2h1M1484.4 646.4h1M1482.1 615.9h1M1480.5 617.6h1M1489.4 650.0h1M1488.7 609.8h1M1485.9 654.6h1M1481.5 635.6h1M1488.7 637.7h1" stroke="#1a1a1a" stroke-width="1.1" fill="none"/><polygon points="1475.0,568.7 1482.5,573.0 1482.5,599.0 1475.0,595.2" fill="#007272" /><rect x="1482.5" y="572.5" width="24" height="26.5" fill="#00e4e4"/><polygon points="1475.0,568.7 1498.6,567.7 1506.5,572.5 1482.5,573.0" fill="#006666" /><text x="1499.6" y="579.4" font-family="Liberation Sans, sans-serif" font-size="11" fill="#c414c4">N2</text><rect x="1534" y="492" width="11" height="59" fill="#909090" opacity="0.55"/><rect x="1534" y="530" width="11" height="19" fill="#ffd966"/><path d="M1534.5 492V551M1544.5 492V551M1534 550.5H1545" stroke="#b5b5b5" stroke-width="1"/><polygon points="1524.0,461.8 1530.0,465.5 1530.0,492.5 1524.0,489.3" fill="#007a7a" /><rect x="1530" y="465" width="24" height="27.5" fill="#00e4e4"/><polygon points="1524.0,461.8 1547.6,460.8 1554.0,465.0 1530.0,465.5" fill="#006666" /><text x="1547.2" y="472.6" font-family="Liberation Sans, sans-serif" font-size="11" fill="#c414c4">BH3</text></g></svg>
<!-- icons -->
<svg style="left:33px;top:55px" width="24" height="32" viewBox="0 0 24 32" ><path d="M1.6 1.6 H15 L22.4 9 V30.2 H1.6 Z" fill="#fff" stroke="#000" stroke-width="1.4"/><path d="M15 1.6 V9 H22.4" fill="none" stroke="#000" stroke-width="1.2"/></svg><svg style="left:73px;top:55px" width="30" height="32" viewBox="0 0 30 32" ><path d="M5.4 1.4 H16.5 L20.8 5.7 V20 H5.4 Z" fill="#fff" stroke="#000" stroke-width="1.3"/><path d="M16.5 1.4 V5.7 H20.8" fill="none" stroke="#000" stroke-width="1"/><path d="M8 5 H13 M8 7.8 H15 M8 10.6 H18.5" stroke="#000" stroke-width="1.1"/><path d="M1.4 13.2 H5.4 V30 H1.4 Z" fill="#e9a400" stroke="#000" stroke-width="1.2"/><path d="M21 13.4 h3.2 v3 h-3.2" fill="#e9a400" stroke="#000" stroke-width="1"/><path d="M1.3 30.2 L4.8 17.8 H13.5 L15.5 15.4 H28 L24.3 30.2 Z" fill="#ffc000" stroke="#000" stroke-width="1.3" stroke-linejoin="round"/><rect x="18" y="17.4" width="6.5" height="1.8" fill="#7878a0"/></svg><svg style="left:127px;top:55px" width="32" height="32" viewBox="0 0 32 32" ><path d="M1.6 1.6 H30.4 V30.2 H6.2 L1.6 25.6 Z" fill="#7878a0" stroke="#000" stroke-width="1.5"/><rect x="6.4" y="3.2" width="18.8" height="14" fill="#fff" stroke="#000" stroke-width="1.2"/><path d="M8.8 6.3 H22.8 M8.8 9 H22.8 M8.8 11.7 H22.8 M8.8 14.4 H22.8" stroke="#000" stroke-width="1.1"/><rect x="7.8" y="21.6" width="13.6" height="8.6" fill="#fff" stroke="#000" stroke-width="1.2"/><rect x="9.6" y="23.4" width="2.4" height="4.8" fill="#7878a0" stroke="#000" stroke-width="0.9"/><path d="M23.8 21.6 V30" stroke="#000" stroke-width="1.2"/><rect x="3" y="3" width="1.4" height="2.4" fill="#000"/><rect x="27.4" y="3" width="1.4" height="2.4" fill="#000"/></svg><svg style="left:0px;top:0px" width="1920" height="100" viewBox="0 0 1920 100" ><path d="M204.3 68.8 L215.2 59.8 V65.6 C226.5 65.6 232.2 72 231.8 82.6 C229.6 76.2 225 72.2 215.2 72.2 V77.9 Z" fill="#404040"/><path d="M286.6 68.8 L276.2 60.2 V65.8 C265.5 65.8 259 72 259.2 82.2 C261.5 76 266 72.4 276.2 72.4 V77.5 Z" fill="#929292"/></svg><svg style="left:332px;top:54.4px" width="32" height="34" viewBox="0 0 32 34" ><path d="M1 1 H13.0 L17.5 5.5 V24.6 H1 Z" fill="#fff" stroke="#222" stroke-width="1.2"/><path d="M13.0 1 V5.5 H17.5" fill="#e8e8e8" stroke="#222" stroke-width="0.96"/><path d="M4 7.8H10M4 10.6H13M4 13.4H13M4 16.2H13M4 19H13" stroke="#222" stroke-width="1.1"/><path d="M14 9 H26.1 L30.6 13.5 V32.4 H14 Z" fill="#fff" stroke="#222" stroke-width="1.2"/><path d="M26.1 9 V13.5 H30.6" fill="#e8e8e8" stroke="#222" stroke-width="0.96"/><path d="M17.4 16H23M17.4 18.8H27.2M17.4 21.6H27.2M17.4 24.4H27.2M17.4 27.2H27.2" stroke="#222" stroke-width="1.1"/></svg><svg style="left:375.4px;top:54.4px" width="33" height="34" viewBox="0 0 33 34" ><rect x="1" y="1" width="22.6" height="26.4" fill="#e8901e" stroke="#2a2a2a" stroke-width="1.3"/><rect x="8.4" y="1.6" width="8" height="2.8" fill="#ffe08a" stroke="#c89030" stroke-width="0.5"/><path d="M15 9 H26.9 L31.4 13.5 V32 H15 Z" fill="#fff" stroke="#222" stroke-width="1.2"/><path d="M26.9 9 V13.5 H31.4" fill="#e8e8e8" stroke="#222" stroke-width="0.96"/><path d="M18.4 16H23M18.4 18.8H28M18.4 21.6H28M18.4 24.4H28M18.4 27.2H28" stroke="#222" stroke-width="1.1"/></svg><svg style="left:430.4px;top:55.2px" width="32" height="32" viewBox="0 0 32 32" ><rect x="1" y="1" width="16.8" height="27.4" fill="#fff" stroke="#222" stroke-width="1.1"/><path d="M7 5 L9.6 5 L9.6 13.4 L4 15 Z" fill="#62a9e6" stroke="#3b86cf" stroke-width="0.8"/><path d="M11 2.8 H26.400000000000002 L30.6 7.0 V30.2 H11 Z" fill="#fff" stroke="#222" stroke-width="1.2"/><path d="M26.400000000000002 2.8 V7.0 H30.6" fill="#e8e8e8" stroke="#222" stroke-width="0.96"/><path d="M17 7.6 L27 13.6 L14.6 17 Z" fill="#62a9e6" stroke="#3b86cf" stroke-width="0.8"/><rect x="17.6" y="21.6" width="10" height="2" fill="#444"/><path d="M17.6 25.6 H27.6 M17.6 27.8 H27.6" stroke="#555" stroke-width="0.9"/></svg><svg style="left:0px;top:0px" width="600" height="100" viewBox="0 0 600 100" ><defs><linearGradient id="pcg" x1="0" y1="1" x2="1" y2="0.2"><stop offset="0" stop-color="#bdbdbd"/><stop offset="0.6" stop-color="#e6e6e6"/><stop offset="1" stop-color="#f0f0f0"/></linearGradient></defs><path d="M504.6 87.4 V62.4 L515.3 55 L536.6 73.6 L535.4 87.4 Z" fill="url(#pcg)"/><path d="M504.6 86.6h1.1M505.5 84.0h1.1M506.3 81.4h1.1M507.2 78.8h1.1M508.1 76.2h1.1M509.1 73.6h1.1M510.1 71.0h1.1M511.1 68.5h1.1M512.2 65.9h1.1M513.3 63.4h1.1M514.4 60.9h1.1M515.5 58.4h1.1M507.9 86.6h1.1M508.8 84.0h1.1M509.6 81.4h1.1M510.5 78.8h1.1M511.4 76.2h1.1M512.4 73.6h1.1M513.4 71.0h1.1M514.4 68.5h1.1M515.5 65.9h1.1M516.6 63.4h1.1M517.7 60.9h1.1M511.2 86.6h1.1M512.1 84.0h1.1M512.9 81.4h1.1M513.8 78.8h1.1M514.7 76.2h1.1M515.7 73.6h1.1M516.7 71.0h1.1M517.7 68.5h1.1M518.8 65.9h1.1M519.9 63.4h1.1M514.6 86.6h1.1M515.4 84.0h1.1M516.2 81.4h1.1M517.1 78.8h1.1M518.0 76.2h1.1M519.0 73.6h1.1M520.0 71.0h1.1M521.0 68.5h1.1M522.1 65.9h1.1M523.2 63.4h1.1M517.9 86.6h1.1M518.7 84.0h1.1M519.5 81.4h1.1M520.4 78.8h1.1M521.3 76.2h1.1M522.3 73.6h1.1M523.3 71.0h1.1M524.3 68.5h1.1M525.4 65.9h1.1M521.2 86.6h1.1M522.0 84.0h1.1M522.8 81.4h1.1M523.7 78.8h1.1M524.6 76.2h1.1M525.6 73.6h1.1M526.6 71.0h1.1M527.6 68.5h1.1M524.5 86.6h1.1M525.3 84.0h1.1M526.1 81.4h1.1M527.0 78.8h1.1M527.9 76.2h1.1M528.9 73.6h1.1M529.9 71.0h1.1M527.8 86.6h1.1M528.6 84.0h1.1M529.4 81.4h1.1M530.3 78.8h1.1M531.2 76.2h1.1M532.2 73.6h1.1M531.1 86.6h1.1M531.9 84.0h1.1M532.7 81.4h1.1M533.6 78.8h1.1M534.5 76.2h1.1M534.4 86.6h1.1M535.2 84.0h1.1" stroke="#0a0a0a" stroke-width="1.15"/></svg><svg style="left:572.6px;top:50.6px" width="14.4" height="14.2" viewBox="0 0 14.4 14.2" ><rect x="0.9" y="0.9" width="12.4" height="12.2" rx="1.2" fill="#fff" stroke="#1e9a1e" stroke-width="1.5"/><path d="M3.6 7 H10.8 M7.2 3.4 V10.6" stroke="#1e9a1e" stroke-width="2"/></svg><svg style="left:621.6px;top:50.6px" width="14.4" height="14.2" viewBox="0 0 14.4 14.2" ><rect x="0.8" y="0.8" width="12.6" height="12.4" rx="1.2" fill="#f4f4f4" stroke="#adadad" stroke-width="1.3"/><path d="M3.4 7 H10.8" stroke="#a4a4a4" stroke-width="1.8"/></svg><svg style="left:567px;top:76.2px" width="14" height="13.6" viewBox="0 0 14 13.6" ><rect x="0.7" y="0.7" width="12.6" height="12.2" fill="#fff" stroke="#222" stroke-width="1.3"/><path d="M2.6 3.2 H11.4 M2.6 5.8 H11.4 M2.6 8.2 H11.4 M2.6 10.6 H11.4 M2.9 3 V10.8 M5.6 3 V10.8 M11.1 3 V10.8" stroke="#222" stroke-width="1"/></svg><svg style="left:0px;top:0px" width="64" height="460" viewBox="0 0 64 460" ><path d="M32 112 V134 M21 123 H43" stroke="#3a3a3a" stroke-width="2.2"/><path d="M32 108.2 L36.8 114.2 H27.2 Z M32 137.8 L36.8 131.8 H27.2 Z M17.2 123 L23.2 118.2 V127.8 Z M46.8 123 L40.8 118.2 V127.8 Z" fill="#3a3a3a"/><path d="M37.4 158.2 C36.6 152.6 33.8 150.6 32 150.8 C28.8 151 27.2 158 27.2 165.4 C27.2 172.8 28.8 179.6 32 179.6 C33.8 179.6 35.4 177 36.4 173" fill="none" stroke="#3a3a3a" stroke-width="2"/><path d="M38.6 170.6 C43.6 169.6 46.6 167.6 46.6 165.4 C46.6 162.4 40 160.4 32 160.4 C24 160.4 17.4 162.4 17.4 165.4 C17.4 167.8 21.4 169.6 26.4 170.4" fill="none" stroke="#3a3a3a" stroke-width="2"/><path d="M32.6 155.6 L39.2 155.2 L36.8 160.6 Z M36.2 169 L42.2 166.6 L41.6 173.6 Z" fill="#3a3a3a"/><path d="M18.4 193.6 H40.8 V198 M18.4 193.6 V215.6 H24" fill="none" stroke="#222" stroke-width="1" stroke-dasharray="2.6 1.8"/><circle cx="34.3" cy="208.6" r="9.6" fill="none" stroke="#3a3a3a" stroke-width="2.2"/><path d="M41.2 215.6 L46 220.8" stroke="#3a3a3a" stroke-width="3"/><rect x="17.4" y="242.2" width="29.4" height="27.4" fill="none" stroke="#2b2b2b" stroke-width="2.2"/><path d="M27 252 l-5.2 -5.2" stroke="#2b2b2b" stroke-width="1.8"/><path d="M20 245 l6.2 0 l-6.2 6.2 Z" fill="#2b2b2b"/><path d="M37 252 l5.2 -5.2" stroke="#2b2b2b" stroke-width="1.8"/><path d="M44 245 l-6.2 0 l6.2 6.2 Z" fill="#2b2b2b"/><path d="M27 260 l-5.2 5.2" stroke="#2b2b2b" stroke-width="1.8"/><path d="M20 267 l6.2 0 l-6.2 -6.2 Z" fill="#2b2b2b"/><path d="M37 260 l5.2 5.2" stroke="#2b2b2b" stroke-width="1.8"/><path d="M44 267 l-6.2 0 l6.2 -6.2 Z" fill="#2b2b2b"/><path d="M30 303 V289 M30 303 L22 309.4 M30 303 L42 305.6" stroke="#2b2b2b" stroke-width="2" fill="none"/><path d="M30 284 L34.6 291 H25.4 Z M17.4 312.6 L21 304.8 L25.6 312.6 Z M46.6 306.2 L40 309.8 L41.4 301.2 Z" fill="#c6c650" stroke="#55551a" stroke-width="0.8"/><path d="M22 331 V349.8 H41" stroke="#2b2b2b" stroke-width="2.2" fill="none"/><path d="M22 325.4 L26.8 331.8 H17.2 Z M46.8 349.8 L40.4 345 V354.6 Z" fill="#c6c650" stroke="#55551a" stroke-width="0.8"/><path d="M23.0 390.79999999999995 l-5.2 -4.2 M40.2 390.79999999999995 l5.4 -4.4 M31.6 398.0 l-7.4 6 M31.6 398.0 l7.4 6 M22.200000000000003 381.0 q-3 -0.6 -5 -1.6 M41.0 381.0 q3 -0.6 5 -1.6 M31.6 378.4 q-8 -0.6 -14 -2.8 M31.6 378.4 q8 -0.6 14.6 -2.8" stroke="#4a4a4a" stroke-width="0.8" fill="none"/><polygon points="31.6,378.4 41.0,381.0 31.6,384.4 22.2,381.0" fill="#f2f2c4" stroke="#222" stroke-width="1.1" stroke-linejoin="round"/><polygon points="22.2,381.0 31.6,384.4 31.6,398.0 23.0,390.8" fill="#c8c85c" stroke="#222" stroke-width="1.1" stroke-linejoin="round"/><polygon points="31.6,384.4 41.0,381.0 40.2,390.8 31.6,398.0" fill="#dede90" stroke="#222" stroke-width="1.1" stroke-linejoin="round"/><path d="M22.200000000000003 425.0 l-5.2 -3 M41.0 425.0 l5.2 -3 M31.6 419.6 l-5 -3 M31.6 419.6 l5 -3 M22.200000000000003 435.6 l-5.4 -3.2 M41.0 435.6 l5.4 -3.2 M31.6 440.8 l-8.4 5 M31.6 440.8 l8.4 5" stroke="#4a4a4a" stroke-width="0.8" fill="none"/><polygon points="31.6,419.6 41.0,425.0 31.6,430.4 22.2,425.0" fill="#f2f2c4" stroke="#222" stroke-width="1.1" stroke-linejoin="round"/><polygon points="22.2,425.0 31.6,430.4 31.6,440.8 22.2,435.6" fill="#c8c85c" stroke="#222" stroke-width="1.1" stroke-linejoin="round"/><polygon points="31.6,430.4 41.0,425.0 41.0,435.6 31.6,440.8" fill="#dede90" stroke="#222" stroke-width="1.1" stroke-linejoin="round"/></svg><svg style="left:0px;top:0px" width="64" height="720" viewBox="0 0 64 720" ><rect x="17.2" y="638.2" width="29.8" height="28.6" fill="#fff" stroke="#333" stroke-width="1.3"/><rect x="17.8" y="638.8" width="28.6" height="3.8" fill="#7ab8f0"/><path d="M17.2 642.60H47 M17.2 645.62H47 M17.2 648.64H47 M17.2 651.66H47 M17.2 654.68H47 M17.2 657.70H47 M17.2 660.72H47 M17.2 663.74H47 M21.4 638.2V666.8 M30.6 638.2V666.8 M41.6 638.2V666.8 " stroke="#333" stroke-width="1.15"/><path d="M42.22 694.20 L46.80 694.54 L46.80 699.46 L42.22 699.80 L41.21 702.25 L44.20 705.72 L40.72 709.20 L37.25 706.21 L34.80 707.22 L34.46 711.80 L29.54 711.80 L29.20 707.22 L26.75 706.21 L23.28 709.20 L19.80 705.72 L22.79 702.25 L21.78 699.80 L17.20 699.46 L17.20 694.54 L21.78 694.20 L22.79 691.75 L19.80 688.28 L23.28 684.80 L26.75 687.79 L29.20 686.78 L29.54 682.20 L34.46 682.20 L34.80 686.78 L37.25 687.79 L40.72 684.80 L44.20 688.28 L41.21 691.75 Z M37.4 697 A5.4 5.4 0 1 0 26.6 697 A5.4 5.4 0 1 0 37.4 697 Z" fill="#c2c258" stroke="#333" stroke-width="1" stroke-linejoin="round" fill-rule="evenodd"/></svg><svg style="left:0px;top:0px" width="1920" height="730" viewBox="0 0 1920 730" ><defs><clipPath id="aic"><rect x="2.6" y="3.6" width="15" height="15" rx="2.6"/></clipPath></defs><g clip-path="url(#aic)"><rect x="2" y="3" width="17" height="6.6" fill="#e6eac0"/><rect x="2" y="9.4" width="17" height="2.6" fill="#b4bc68"/><rect x="2" y="11.8" width="17" height="3" fill="#8e8e8e"/><rect x="2" y="14.6" width="17" height="2" fill="#f4f4f4"/><rect x="2" y="16.4" width="17" height="3" fill="#9a9a9a"/><path d="M3 9.4 q4 -0.8 8 0 t7 0 M3 11.6 q3 0.8 6 0 t9 0.2 M3 14 q3 1 7 0 M11 13.2 q3 -0.8 6 0 M4 16.6 q5 0.8 13 -0.2" stroke="#111" stroke-width="0.9" fill="none"/></g><rect x="2.6" y="3.6" width="15" height="15" rx="2.6" fill="none" stroke="#2a6a1a" stroke-width="1.2"/><path d="M1802 14.6 H1812" stroke="#a6a6a6" stroke-width="1.2"/><path d="M1849.6 8.6 V6.6 H1857.4 V13.4 H1855.4" fill="none" stroke="#a6a6a6" stroke-width="1.1"/><rect x="1847.6" y="8.6" width="7.8" height="6.8" fill="none" stroke="#a6a6a6" stroke-width="1.1"/><path d="M1892.4 6.8 L1902.8 17.2 M1902.8 6.8 L1892.4 17.2" stroke="#a6a6a6" stroke-width="1.3"/><path d="M880 722.5 h15 l-3 3.6 h-9 z" fill="#f4f4f4" stroke="#b8b8b8" stroke-width="0.8"/><path d="M884 724.4h7" stroke="#b0b0b0" stroke-width="0.8" stroke-dasharray="1 1"/></svg>
<!-- icons_r -->
<svg style="left:0px;top:0px" width="1920" height="560" viewBox="0 0 1920 560" ><rect x="1787" y="129" width="12.4" height="3.6" fill="#e8901e"/><rect x="1787" y="134" width="4.8" height="9.2" fill="#1e6bc8"/><path d="M1793.2 134.6h6.2M1793.2 136.8h6.2M1793.2 139h6.2M1793.2 141.2h6.2M1793.2 143h6.2" stroke="#333" stroke-width="1"/><rect x="1786.6" y="150.8" width="13" height="14.6" fill="#fff" stroke="#333" stroke-width="1.3"/><path d="M1789 154h8.2M1789 156.4h8.2M1789 158.8h8.2M1789 161.2h8.2M1789 163.4h8.2" stroke="#444" stroke-width="0.9"/><path d="M1798.01 185.59 L1800.09 185.73 L1800.09 188.27 L1798.01 188.41 L1797.53 189.55 L1798.91 191.12 L1797.12 192.91 L1795.55 191.53 L1794.41 192.01 L1794.27 194.09 L1791.73 194.09 L1791.59 192.01 L1790.45 191.53 L1788.88 192.91 L1787.09 191.12 L1788.47 189.55 L1787.99 188.41 L1785.91 188.27 L1785.91 185.73 L1787.99 185.59 L1788.47 184.45 L1787.09 182.88 L1788.88 181.09 L1790.45 182.47 L1791.59 181.99 L1791.73 179.91 L1794.27 179.91 L1794.41 181.99 L1795.55 182.47 L1797.12 181.09 L1798.91 182.88 L1797.53 184.45 Z M1795.6 187 A2.6 2.6 0 1 0 1790.4 187 A2.6 2.6 0 1 0 1795.6 187 Z" fill="#3a3a3a" stroke="#3a3a3a" stroke-width="0.4" stroke-linejoin="round" fill-rule="evenodd"/><path d="M1787 203 H1793.6 V209 H1799 V215 H1787 Z" fill="#ffc832" stroke="#2a2a2a" stroke-width="1.5"/><rect x="1785.9" y="201.9" width="2.2" height="2.2" fill="#fff" stroke="#2a2a2a" stroke-width="0.7"/><rect x="1792.5" y="201.9" width="2.2" height="2.2" fill="#fff" stroke="#2a2a2a" stroke-width="0.7"/><rect x="1792.5" y="207.9" width="2.2" height="2.2" fill="#fff" stroke="#2a2a2a" stroke-width="0.7"/><rect x="1797.9" y="207.9" width="2.2" height="2.2" fill="#fff" stroke="#2a2a2a" stroke-width="0.7"/><rect x="1797.9" y="213.9" width="2.2" height="2.2" fill="#fff" stroke="#2a2a2a" stroke-width="0.7"/><rect x="1785.9" y="213.9" width="2.2" height="2.2" fill="#fff" stroke="#2a2a2a" stroke-width="0.7"/><path d="M1788.2 234.2 A7 7 0 1 1 1798.6 234.2" fill="#fff" stroke="#444" stroke-width="1"/><path d="M1786.6 227.2 H1800.2 M1786.4 231 H1800.4 M1793.4 222.8 V233 M1790 233.6 C1788 230 1788.6 225.6 1792 223 M1796.8 233.6 C1798.8 230 1798.2 225.6 1794.8 223" fill="none" stroke="#444" stroke-width="0.9"/><path d="M1793.4 232.6 V237 M1791 235.2 L1793.4 237.8 L1795.8 235.2" fill="none" stroke="#222" stroke-width="1.1"/><path d="M1785.4 252.2 L1800.8 267.8 M1800.8 252.2 L1785.4 267.8" stroke="#555" stroke-width="0.9"/><circle cx="1793.1" cy="260" r="2.6" fill="#fff" stroke="#333" stroke-width="1"/><path d="M1787 288 L1799.2 276" stroke="#f0f" stroke-width="2"/><circle cx="1787" cy="288" r="1.7" fill="#fff" stroke="#333" stroke-width="0.9"/><circle cx="1799.2" cy="276" r="1.7" fill="#fff" stroke="#333" stroke-width="0.9"/><path d="M1791 304.4 L1796 307.6 H1793.6 L1797.6 310.6 H1794 L1798.2 313.4 H1794.4 V315.2 H1798 V316.8 H1791 Z" fill="#f0f" stroke="#902090" stroke-width="0.5"/><path d="M1790.6 303.2 V318.4" stroke="#333" stroke-width="1.2"/><rect x="1787.4" y="326.8" width="11.2" height="13.8" fill="#ffc030" stroke="#333" stroke-width="1.3"/><path d="M1788 332 L1792 327.4 M1788 337 L1796.4 327.4 M1789.4 340 L1798 330 M1793.8 340 L1798 335.2" stroke="#c07a08" stroke-width="1"/><path d="M1785.6 354 V361 H1800.8 V354" fill="none" stroke="#444" stroke-width="1" stroke-dasharray="1.6 1.4"/><path d="M1785 353.2 H1801.2" stroke="#8b1010" stroke-width="1.1"/><path d="M1792.6 358.6 V350" stroke="#f0f" stroke-width="1.6"/><path d="M1792.6 347.6 L1795 351 H1790.2 Z" fill="#f0f"/><rect x="1789" y="381.4" width="12" height="9.2" fill="#6eb4f0"/><path d="M1790.4 383.2h2.6M1794.6 383.2h2.8M1798.8 383.2h2" stroke="#1e5cc0" stroke-width="1.2"/><rect x="1785.6" y="379.6" width="3" height="11" fill="#c8c8c8" stroke="#555" stroke-width="0.9"/><path d="M1788.6 379.6 H1801.2" stroke="#8b1010" stroke-width="1.1"/><path d="M1785.6 401.2 V412.4 H1800.8 V403.6" fill="none" stroke="#444" stroke-width="1" stroke-dasharray="1.6 1.4"/><path d="M1785.2 399.4 C1789.4 399 1793.4 402.8 1801 402.8" fill="none" stroke="#8b1010" stroke-width="1.1"/><path d="M1788 401.4 V408.6 M1788 403 h2 M1788 405.2 h1.6 M1788 407.4 h2 M1797 404.2 V411 M1797 405.6 h1.8 M1797 407.8 h1.4 M1797 409.8 h1.8" stroke="#1e5cc0" stroke-width="1.2" fill="none"/><path d="M1787 441.2 L1792.2 430 L1799.2 436.6" fill="none" stroke="#f0f" stroke-width="1.9"/><circle cx="1787" cy="441.2" r="1.7" fill="#f4f4f4" stroke="#333" stroke-width="0.9"/><circle cx="1792.2" cy="430" r="1.7" fill="#f4f4f4" stroke="#333" stroke-width="0.9"/><circle cx="1799.2" cy="436.6" r="1.7" fill="#f4f4f4" stroke="#333" stroke-width="0.9"/><path d="M1789 461.4 L1797.4 458.6 V469.6 L1789 466.6 Z" fill="#1fb1a6"/><path d="M1789 462.8 L1797.4 461.6 V465.4 L1789 465 Z" fill="#e87820"/><path d="M1787.6 457.6 V470.2 M1798.8 457.6 V470.2" stroke="#333" stroke-width="1.2"/><rect x="1785.6" y="485" width="15.2" height="7.4" fill="#fff"/><path d="M1785.6 485 V492.4 H1800.8 V485" fill="none" stroke="#444" stroke-width="1" stroke-dasharray="1.6 1.4"/><path d="M1785 484.4 H1801.2" stroke="#8b1010" stroke-width="1.1"/><path d="M1793 482.4 V491" stroke="#f0f" stroke-width="2.2"/><path d="M1791 482.9 H1795" stroke="#f0f" stroke-width="1.4"/><rect x="1785.6" y="506" width="15.2" height="8.6" fill="#fff"/><path d="M1785.6 507 V514.6 H1800.8 V504" fill="none" stroke="#444" stroke-width="1" stroke-dasharray="1.6 1.4"/><path d="M1787.3 506.4V511.6M1789.4 506V511.6M1791.6 505.4V511.6M1793.8 504.8V511.6M1795.6 504.2V511.6M1797.4 503.8V511.6M1787 511.4H1798" stroke="#f0f" stroke-width="1.1" fill="none"/><path d="M1785 506.6 C1790 505.6 1794 503.4 1801 503.2" fill="none" stroke="#8b1010" stroke-width="1.1"/><path d="M1786 536.8 V533.6 C1789 533.6 1791 533 1793 531.8 C1795 530.8 1797 530.4 1800 530.6 V536.8 Z" fill="#6e3030"/><path d="M1786 533.2 V529.4 C1789 529.4 1792 528 1794.4 528.4 C1796 528.8 1797.6 530.2 1800 530.4 C1797 530 1795 530.6 1793 531.6 C1791 532.8 1789 533.2 1786 533.2 Z" fill="#ffa820"/><path d="M1786 529.2 V526.6 C1789 526.4 1791 524 1793.4 524 C1796 524.2 1798 527 1800 528.4 V530.4 C1797.6 530 1796 528.6 1794.4 528.2 C1792 527.8 1789 529.2 1786 529.2 Z" fill="#4caf50"/></svg>
<!-- icons_b -->
<svg style="left:0px;top:0px" width="1920" height="1032" viewBox="0 0 1920 1032" ><path d="M66.6 767.2v3M66.6 793v3M62 771.8h3M88 771.8h3M69.3 767.2v3M69.3 793v3M62 774.5h3M88 774.5h3M72.0 767.2v3M72.0 793v3M62 777.1999999999999h3M88 777.1999999999999h3M74.69999999999999 767.2v3M74.69999999999999 793v3M62 779.9h3M88 779.9h3M77.39999999999999 767.2v3M77.39999999999999 793v3M62 782.5999999999999h3M88 782.5999999999999h3M80.1 767.2v3M80.1 793v3M62 785.3h3M88 785.3h3M82.8 767.2v3M82.8 793v3M62 788.0h3M88 788.0h3M85.5 767.2v3M85.5 793v3M62 790.6999999999999h3M88 790.6999999999999h3" stroke="#222" stroke-width="1.1"/><rect x="64.6" y="769.8" width="23.6" height="23.4" rx="1" fill="#3a3a3a"/><rect x="69.4" y="774" width="14.4" height="15" fill="#3a3a3a" stroke="#fff" stroke-width="1.2"/><circle cx="84" cy="789" r="8.2" fill="#fff"/><circle cx="84" cy="789" r="7" fill="#0c9a0c"/><path d="M81.4 784.8 L88.6 789 L81.4 793.2 Z" fill="#fff"/><path d="M251.8 741.8h3.2M256.8 741.8h17.4M251.8 746.4h3.2M256.8 746.4h17.4M251.8 751.2h3.2M256.8 751.2h17.4" stroke="#333" stroke-width="3"/><path d="M301.5 745.6H309.29999999999995M305.4 741.7V749.5" stroke="#0c9a0c" stroke-width="3.0" stroke-linecap="round"/><g transform="translate(321.3 746.6) rotate(-42)"><ellipse cx="0" cy="0" rx="7.4" ry="4.2" fill="#fff" stroke="#444" stroke-width="1.1"/><path d="M2 -4 Q7.2 -3.8 7.4 0 H2 Z" fill="#28c028"/><path d="M2 -4.2V4.2M2 0H7.4" stroke="#444" stroke-width="0.9"/></g><path d="M325.6 741.4 C326.6 739 329.4 738.6 330 740.6 C330.4 742 331 742.8 332 743.2" fill="none" stroke="#444" stroke-width="1"/><path d="M433.6 745.6H441.4M437.5 741.7V749.5" stroke="#0c9a0c" stroke-width="3.0" stroke-linecap="round"/><rect x="446.6" y="741.8" width="16.8" height="10.8" rx="1" fill="#fff" stroke="#333" stroke-width="1.3"/><path d="M454.4 741.4 V739.4 H460.4 L461.6 738.2" fill="none" stroke="#333" stroke-width="1"/><path d="M448 744h2M451 744h2M454 744h2M457.2 744h2M460.2 744h2M458.2 747h3.8" stroke="#0c9a0c" stroke-width="1.7"/><path d="M448.2 747h2.6M452.4 747h1.8M455.6 747h1.8M448.2 750h1.8M451.2 750h7.6M460.2 750h1.8" stroke="#111" stroke-width="1.6"/><rect x="1677.6" y="739.4" width="2.8" height="13" fill="#0c9a0c" stroke="#333" stroke-width="1"/><rect x="1689.8" y="739.4" width="3" height="13" fill="#fff" stroke="#333" stroke-width="1"/><path d="M1680.6 747.4 H1686" stroke="#0c9a0c" stroke-width="2.2"/><path d="M1685 743.6 L1690 747.4 L1685 751.2 Z" fill="#0c9a0c"/><rect x="1785.6" y="824.6" width="15" height="14.6" rx="1" fill="#fff" stroke="#444" stroke-width="1"/><path d="M1788.4 829v7.0h5.2v-2.4h-2.0v-2.0h-1.4v-2.6z" fill="none" stroke="#333" stroke-width="1"/><path d="M1794 828.6h5M1796.5 826.1v5" stroke="#0c9a0c" stroke-width="1.6"/><rect x="1785.6" y="891.6" width="15" height="14.6" rx="1" fill="#fff" stroke="#444" stroke-width="1"/><path d="M1788.4 896v7.0h5.2v-2.4h-2.0v-2.0h-1.4v-2.6z" fill="none" stroke="#333" stroke-width="1"/><path d="M1792.6 894.6h5.6M1792.6 896.8h5.6M1794.4 899h3.8" stroke="#333" stroke-width="0.9"/><rect x="1786.6" y="928.2" width="12.8" height="11.2" fill="#fff" stroke="#333" stroke-width="1"/><path d="M1787 930.6h12M1787 932.6h12M1787 934.6h12M1787 936.6h12M1790.2 928.4v11M1793 928.4v11M1796 928.4v11" stroke="#555" stroke-width="0.7"/><rect x="1802.6" y="967.2" width="2.6" height="4" fill="#8c7a58" stroke="#000" stroke-width="0.8"/><rect x="1820.4" y="967.2" width="2.6" height="4" fill="#c8b088" stroke="#000" stroke-width="0.8"/><rect x="1805" y="965.2" width="16" height="6.4" rx="1" fill="#fff" stroke="#000" stroke-width="1.1"/><rect x="1801.6" y="971.2" width="22.8" height="11.6" rx="1.2" fill="#c8b088" stroke="#000" stroke-width="1.2"/><rect x="1803.4" y="972.6" width="1.4" height="1" fill="#000"/><rect x="1820.6" y="972.6" width="2" height="1" fill="#000"/><rect x="1804" y="976.6" width="18" height="3.6" fill="#222"/><path d="M1806 978.0h2M1809.6 978.0h2M1813.2 978.0h2M1816.8 978.0h2" stroke="#aaa" stroke-width="0.9"/><rect x="1804.8" y="980.0" width="16.2" height="13" rx="0.8" fill="#fff" stroke="#000" stroke-width="1.2"/><path d="M1807.4 983.5h11.4M1807.4 985.5h11.4M1810.4 987.5h8.4M1807.4 989.5h2M1811.4 989.5h7.4M1812.4 991.5h1M1814.4 991.5h2M1817.4 991.5h1.4M1808.4 987.5h1" stroke="#000" stroke-width="1" fill="none" shape-rendering="crispEdges"/><rect x="1871.3999999999999" y="967.2" width="2.6" height="4" fill="#8c7a58" stroke="#000" stroke-width="0.8"/><rect x="1889.2" y="967.2" width="2.6" height="4" fill="#c8b088" stroke="#000" stroke-width="0.8"/><rect x="1873.8" y="965.2" width="16" height="6.4" rx="1" fill="#fff" stroke="#000" stroke-width="1.1"/><rect x="1870.3999999999999" y="971.2" width="22.8" height="11.6" rx="1.2" fill="#c8b088" stroke="#000" stroke-width="1.2"/><rect x="1872.2" y="972.6" width="1.4" height="1" fill="#000"/><rect x="1889.3999999999999" y="972.6" width="2" height="1" fill="#000"/><rect x="1872.8" y="976.6" width="18" height="3.6" fill="#222"/><path d="M1874.8 978.0h2M1878.3999999999999 978.0h2M1882.0 978.0h2M1885.6 978.0h2" stroke="#aaa" stroke-width="0.9"/><rect x="1873.6" y="980.0" width="16.2" height="13" rx="0.8" fill="#fff" stroke="#000" stroke-width="1.2"/><path d="M1878.0 982.8000000000001h-1.6v8h1.6" fill="none" stroke="#f00" stroke-width="1.1"/><path d="M1879.3999999999999 982.8000000000001h7v8h-1.6l-5.4 -6.4z" fill="none" stroke="#f00" stroke-width="1.1"/><path d="M1881.2 984.8000000000001h4.6M1882.6 986.8000000000001h3.2M1884.0 988.8000000000001h2" stroke="#f00" stroke-width="1.1" fill="none"/><rect x="1785.4" y="1006.4" width="8" height="10" rx="1" fill="#fff" stroke="#555" stroke-width="0.9"/><path d="M1787.4 1008.4v4.62h3.4320000000000004v-1.584h-1.32v-1.32h-0.9239999999999999v-1.7160000000000002z" fill="none" stroke="#333" stroke-width="1"/><path d="M1795 1010h2.4v4.4" fill="none" stroke="#0c9a0c" stroke-width="1.2"/><path d="M1795.4 1013.6 L1797.4 1016 L1799.4 1013.6 Z" fill="#0c9a0c"/><rect x="1794.6" y="1016.6" width="6" height="4.6" rx="0.6" fill="#fff" stroke="#333" stroke-width="1.1"/><path d="M1796.4 1018.6h2.4" stroke="#333" stroke-width="1"/></svg>
</body></html>
